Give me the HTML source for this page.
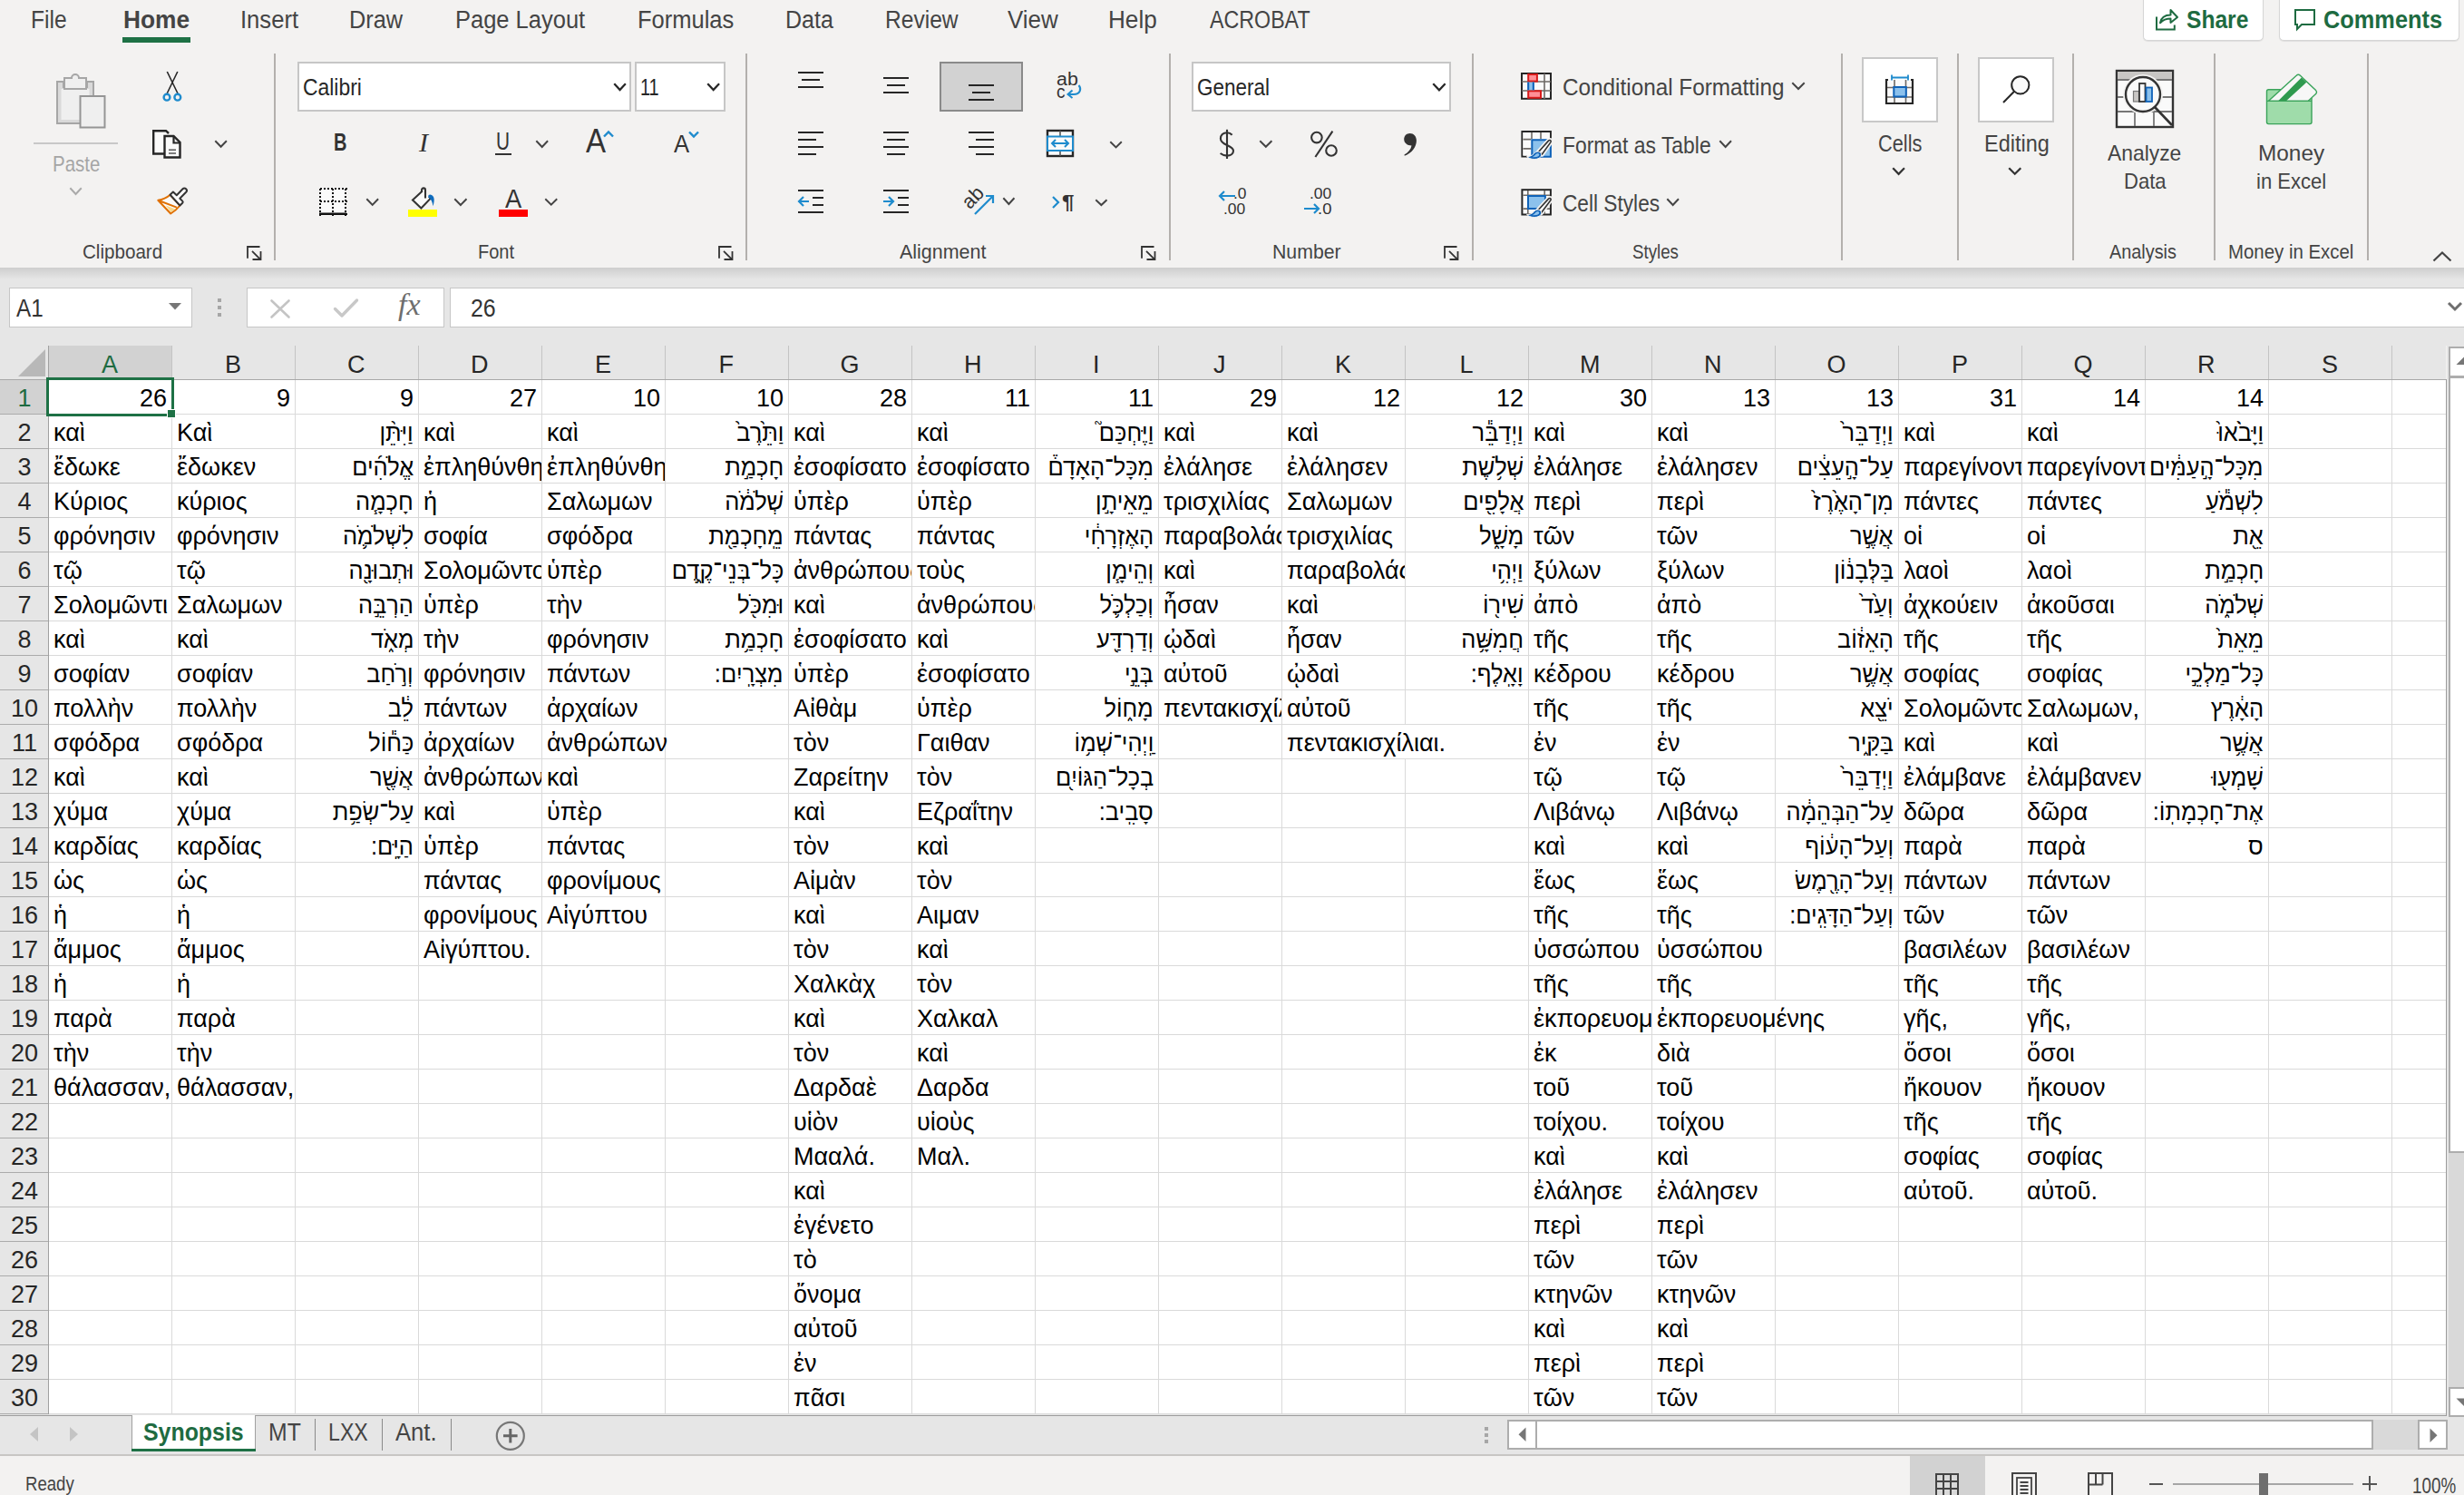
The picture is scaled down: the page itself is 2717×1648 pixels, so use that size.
<!DOCTYPE html>
<html><head><meta charset="utf-8"><title>Excel</title>
<style>
html,body{margin:0;padding:0;}
body{width:2717px;height:1648px;overflow:hidden;position:relative;background:#f3f2f1;font-family:"Liberation Sans",sans-serif;}
.t{position:absolute;white-space:nowrap;}
.r{position:absolute;}
.s{position:absolute;overflow:visible;}
.cell{position:absolute;overflow:hidden;white-space:nowrap;font-size:27px;line-height:38px;color:#000;}
</style></head><body>

<div class="t" style="left:33.80px;top:8.59px;font-size:27px;line-height:27px;color:#444444;transform:scaleX(0.9091);transform-origin:0 0;">File</div>
<div class="t" style="left:136.00px;top:8.59px;font-size:27px;line-height:27px;color:#444444;font-weight:bold;transform:scaleX(0.9733);transform-origin:0 0;">Home</div>
<div class="t" style="left:264.80px;top:8.59px;font-size:27px;line-height:27px;color:#444444;transform:scaleX(0.9485);transform-origin:0 0;">Insert</div>
<div class="t" style="left:384.60px;top:8.59px;font-size:27px;line-height:27px;color:#444444;transform:scaleX(0.9375);transform-origin:0 0;">Draw</div>
<div class="t" style="left:502.20px;top:8.59px;font-size:27px;line-height:27px;color:#444444;transform:scaleX(0.9441);transform-origin:0 0;">Page Layout</div>
<div class="t" style="left:703.00px;top:8.59px;font-size:27px;line-height:27px;color:#444444;transform:scaleX(0.9442);transform-origin:0 0;">Formulas</div>
<div class="t" style="left:865.70px;top:8.59px;font-size:27px;line-height:27px;color:#444444;transform:scaleX(0.9259);transform-origin:0 0;">Data</div>
<div class="t" style="left:976.00px;top:8.59px;font-size:27px;line-height:27px;color:#444444;transform:scaleX(0.9101);transform-origin:0 0;">Review</div>
<div class="t" style="left:1111.00px;top:8.59px;font-size:27px;line-height:27px;color:#444444;transform:scaleX(0.9610);transform-origin:0 0;">View</div>
<div class="t" style="left:1221.80px;top:8.59px;font-size:27px;line-height:27px;color:#444444;transform:scaleX(0.9679);transform-origin:0 0;">Help</div>
<div class="t" style="left:1334.00px;top:8.59px;font-size:27px;line-height:27px;color:#444444;transform:scaleX(0.8605);transform-origin:0 0;">ACROBAT</div>
<div class="r" style="left:135px;top:41px;width:75px;height:6px;background:#1e7145;"></div>
<div class="r" style="left:2363px;top:-6px;width:131px;height:49px;background:#fff;border:1px solid #d6d6d6;border-radius:5px;box-shadow:0 1px 1px rgba(0,0,0,0.08)"></div>
<div class="r" style="left:2513px;top:-6px;width:197px;height:49px;background:#fff;border:1px solid #d6d6d6;border-radius:5px;box-shadow:0 1px 1px rgba(0,0,0,0.08)"></div>
<svg class="s" style="left:2376px;top:8px;" width="28" height="28" viewBox="0 0 28 28"><path d="M2 10.4 V24.4 H21.8 V19.5" fill="none" stroke="#1e6b41" stroke-width="2"/><path d="M6 17.2 C7 11.5 11.5 8.5 17.5 8.5 V3 L25 11 L17.5 17 V12.5 C12 12.5 9 14 6 17.2 Z" fill="none" stroke="#1e6b41" stroke-width="2" stroke-linejoin="round"/></svg>
<div class="t" style="left:2410.70px;top:7.74px;font-size:28px;line-height:28px;color:#1e6b41;font-weight:bold;transform:scaleX(0.8782);transform-origin:0 0;">Share</div>
<svg class="s" style="left:2528px;top:8px;" width="28" height="28" viewBox="0 0 28 28"><path d="M3 3 H24 V19 H10 L5 24 V19 H3 Z" fill="none" stroke="#1e6b41" stroke-width="2" stroke-linejoin="miter"/></svg>
<div class="t" style="left:2561.80px;top:7.74px;font-size:28px;line-height:28px;color:#1e6b41;font-weight:bold;transform:scaleX(0.9055);transform-origin:0 0;">Comments</div>
<div class="r" style="left:302px;top:59px;width:2px;height:228px;background:#b3b0ad;"></div>
<div class="r" style="left:822px;top:59px;width:2px;height:228px;background:#b3b0ad;"></div>
<div class="r" style="left:1289px;top:59px;width:2px;height:228px;background:#b3b0ad;"></div>
<div class="r" style="left:1623px;top:59px;width:2px;height:228px;background:#b3b0ad;"></div>
<div class="r" style="left:2030px;top:59px;width:2px;height:228px;background:#b3b0ad;"></div>
<div class="r" style="left:2158px;top:59px;width:2px;height:228px;background:#b3b0ad;"></div>
<div class="r" style="left:2285px;top:59px;width:2px;height:228px;background:#b3b0ad;"></div>
<div class="r" style="left:2441px;top:59px;width:2px;height:228px;background:#b3b0ad;"></div>
<div class="r" style="left:2610px;top:59px;width:2px;height:228px;background:#b3b0ad;"></div>
<div class="t" style="left:90.60px;top:267.11px;font-size:22px;line-height:22px;color:#444444;transform:scaleX(0.9362);transform-origin:0 0;">Clipboard</div>
<div class="t" style="left:526.70px;top:267.11px;font-size:22px;line-height:22px;color:#444444;transform:scaleX(0.9091);transform-origin:0 0;">Font</div>
<div class="t" style="left:992.40px;top:267.11px;font-size:22px;line-height:22px;color:#444444;transform:scaleX(0.9755);transform-origin:0 0;">Alignment</div>
<div class="t" style="left:1402.60px;top:267.11px;font-size:22px;line-height:22px;color:#444444;transform:scaleX(0.9667);transform-origin:0 0;">Number</div>
<div class="t" style="left:1800.00px;top:267.11px;font-size:22px;line-height:22px;color:#444444;transform:scaleX(0.8500);transform-origin:0 0;">Styles</div>
<div class="t" style="left:2326.40px;top:267.11px;font-size:22px;line-height:22px;color:#444444;transform:scaleX(0.9024);transform-origin:0 0;">Analysis</div>
<div class="t" style="left:2457.20px;top:267.11px;font-size:22px;line-height:22px;color:#444444;transform:scaleX(0.9275);transform-origin:0 0;">Money in Excel</div>
<svg class="s" style="left:272.4px;top:271px;" width="17" height="17" viewBox="0 0 17 17"><path d="M1 13.8 V1 H14.5" fill="none" stroke="#333" stroke-width="1.8"/><path d="M6 5.8 L15 14.8 M6.5 15 H15.5 V6" fill="none" stroke="#333" stroke-width="1.8"/></svg>
<svg class="s" style="left:791.5px;top:271px;" width="17" height="17" viewBox="0 0 17 17"><path d="M1 13.8 V1 H14.5" fill="none" stroke="#333" stroke-width="1.8"/><path d="M6 5.8 L15 14.8 M6.5 15 H15.5 V6" fill="none" stroke="#333" stroke-width="1.8"/></svg>
<svg class="s" style="left:1258px;top:271px;" width="17" height="17" viewBox="0 0 17 17"><path d="M1 13.8 V1 H14.5" fill="none" stroke="#333" stroke-width="1.8"/><path d="M6 5.8 L15 14.8 M6.5 15 H15.5 V6" fill="none" stroke="#333" stroke-width="1.8"/></svg>
<svg class="s" style="left:1592px;top:271px;" width="17" height="17" viewBox="0 0 17 17"><path d="M1 13.8 V1 H14.5" fill="none" stroke="#333" stroke-width="1.8"/><path d="M6 5.8 L15 14.8 M6.5 15 H15.5 V6" fill="none" stroke="#333" stroke-width="1.8"/></svg>
<svg class="s" style="left:2681px;top:276px;" width="24" height="14" viewBox="0 0 24 14"><polyline points="2.5,11.5 12,2.5 21.5,11.5" fill="none" stroke="#444" stroke-width="2.2"/></svg>
<svg class="s" style="left:60px;top:79px;" width="60" height="64" viewBox="0 0 60 64"><path d="M3 11 H10 V17 H36 V11 H43 V57 H3 Z" fill="#d9d9d9" stroke="#a6a6a6" stroke-width="2"/><rect x="7.5" y="19" width="31" height="34" fill="#efefef"/><path d="M11 4 H19 A4 4 0 0 1 27 4 H35 V16 H11 Z" transform="translate(0,3)" fill="#efefef" stroke="#a6a6a6" stroke-width="2"/><rect x="28.5" y="27" width="27" height="34.5" fill="#efefef" stroke="#959595" stroke-width="2"/></svg>
<div class="r" style="left:37px;top:157px;width:93px;height:2px;background:#c8c8c8;"></div>
<div class="t" style="left:57.60px;top:168.62px;font-size:24px;line-height:24px;color:#a5a5a5;transform:scaleX(0.8525);transform-origin:0 0;">Paste</div>
<svg class="s" style="left:75.5px;top:206px;" width="15.099999999999994" height="11" viewBox="0 0 15.099999999999994 11"><polyline points="2,2 7.55,8.00 13.10,2" fill="none" stroke="#aaaaaa" stroke-width="2" stroke-linecap="square" stroke-linejoin="miter"/></svg>
<svg class="s" style="left:176px;top:76px;" width="28" height="38" viewBox="0 0 28 38"><path d="M8.3 3 L20 27 M19.8 3 L8.2 27" fill="none" stroke="#262626" stroke-width="1.6"/><circle cx="8" cy="31.2" r="3.4" fill="none" stroke="#1e8bcd" stroke-width="2.4"/><circle cx="19.8" cy="31.2" r="3.4" fill="none" stroke="#1e8bcd" stroke-width="2.4"/></svg>
<svg class="s" style="left:166px;top:141px;" width="38" height="36" viewBox="0 0 38 36"><path d="M15.5 28.5 H3.2 V3.2 H17 L20 6" fill="#fafafa" stroke="#262626" stroke-width="2.4"/><path d="M15.5 9 H25.5 L32.5 16 V32.5 H15.5 Z" fill="#fafafa" stroke="#262626" stroke-width="2.4"/><path d="M25.5 9 V16.5 H32.5" fill="none" stroke="#262626" stroke-width="2.2"/><path d="M20 24.3 H28 M20 28 H28" stroke="#555" stroke-width="1.6"/></svg>
<svg class="s" style="left:236.2px;top:154px;" width="15.200000000000017" height="10.800000000000011" viewBox="0 0 15.200000000000017 10.800000000000011"><polyline points="2,2 7.60,7.80 13.20,2" fill="none" stroke="#444" stroke-width="2" stroke-linecap="square" stroke-linejoin="miter"/></svg>
<svg class="s" style="left:172px;top:205px;" width="38" height="36" viewBox="0 0 38 36"><path d="M2.3 15.8 C8 15 12 13 15.6 9.8 L26.4 21.5 C23 26 19.5 28.5 16.2 30.5 Z" fill="#fafafa"/><path d="M10.8 21.5 L21.5 25.4 L16.5 29 Z" fill="#f9d98c"/><path d="M2.3 15.8 C8 15 12 13 15.6 9.8 L26.4 21.5 C23 26 19.5 28.5 16.2 30.5 Z M2.3 15.8 L22.8 23.6" fill="none" stroke="#e07000" stroke-width="2" stroke-linejoin="round"/><path d="M15.6 9.8 L18.9 6.5 L22.8 10.2 L29.5 3.3 A2.5 2.5 0 0 1 33.2 6.8 L26.3 13.7 L29.2 16.6 A1.6 1.6 0 0 1 29.2 18.8 L26.4 21.5 Z" fill="#fafafa" stroke="#333" stroke-width="2" stroke-linejoin="round"/></svg>
<div class="r" style="left:328px;top:67.6px;width:368px;height:55px;background:#fff;box-sizing:border-box;border:2px solid #c6c6c6;"></div>
<div class="r" style="left:699.5px;top:67.6px;width:100px;height:55px;background:#fff;box-sizing:border-box;border:2px solid #c6c6c6;"></div>
<div class="t" style="left:333.50px;top:83.88px;font-size:25px;line-height:25px;color:#262626;transform:scaleX(0.9155);transform-origin:0 0;">Calibri</div>
<svg class="s" style="left:676.4px;top:91.3px;" width="15.100000000000023" height="11.100000000000009" viewBox="0 0 15.100000000000023 11.100000000000009"><polyline points="2,2 7.55,8.10 13.10,2" fill="none" stroke="#262626" stroke-width="2.2" stroke-linecap="square" stroke-linejoin="miter"/></svg>
<div class="t" style="left:706.00px;top:83.58px;font-size:25px;line-height:25px;color:#262626;transform:scaleX(0.7962);transform-origin:0 0;">11</div>
<svg class="s" style="left:779.3px;top:91.3px;" width="15.300000000000068" height="11.100000000000009" viewBox="0 0 15.300000000000068 11.100000000000009"><polyline points="2,2 7.65,8.10 13.30,2" fill="none" stroke="#262626" stroke-width="2.2" stroke-linecap="square" stroke-linejoin="miter"/></svg>
<div class="t" style="left:367.50px;top:143.34px;font-size:28px;line-height:28px;color:#333;font-weight:bold;transform:scaleX(0.7150);transform-origin:0 0;">B</div>
<div class="t" style="left:462px;top:142px;font-family:'Liberation Serif';font-style:italic;font-size:30px;line-height:30px;color:#333">I</div>
<div class="t" style="left:547.00px;top:143.19px;font-size:27px;line-height:27px;color:#333;transform:scaleX(0.7700);transform-origin:0 0;">U</div>
<div class="r" style="left:546px;top:169px;width:18px;height:2px;background:#333;"></div>
<svg class="s" style="left:590.3px;top:154.2px;" width="15.400000000000091" height="11.0" viewBox="0 0 15.400000000000091 11.0"><polyline points="2,2 7.70,8.00 13.40,2" fill="none" stroke="#444" stroke-width="2" stroke-linecap="square" stroke-linejoin="miter"/></svg>
<div class="t" style="left:645.90px;top:138.48px;font-size:36px;line-height:36px;color:#333;transform:scaleX(0.9167);transform-origin:0 0;">A</div>
<svg class="s" style="left:664px;top:143px;" width="14" height="10" viewBox="0 0 14 10"><polyline points="2,7.5 7,2.5 12,7.5" fill="none" stroke="#1e8bcd" stroke-width="2.4"/></svg>
<div class="t" style="left:743.20px;top:145.24px;font-size:28px;line-height:28px;color:#333;transform:scaleX(0.9158);transform-origin:0 0;">A</div>
<svg class="s" style="left:758px;top:143px;" width="14" height="10" viewBox="0 0 14 10"><polyline points="2,2.5 7,7.5 12,2.5" fill="none" stroke="#1e8bcd" stroke-width="2.4"/></svg>
<svg class="s" style="left:352px;top:207px;" width="31" height="31" viewBox="0 0 31 31"><rect x="0" y="0" width="30" height="28" fill="#fafafa"/><g fill="#111"><rect x="1" y="0" width="2" height="2"/><rect x="1" y="28" width="2" height="2"/><rect x="0" y="1" width="2" height="2"/><rect x="28" y="1" width="2" height="2"/><rect x="14" y="1" width="2" height="2"/><rect x="1" y="14" width="2" height="2"/><rect x="5" y="0" width="2" height="2"/><rect x="5" y="28" width="2" height="2"/><rect x="0" y="5" width="2" height="2"/><rect x="28" y="5" width="2" height="2"/><rect x="14" y="5" width="2" height="2"/><rect x="5" y="14" width="2" height="2"/><rect x="9" y="0" width="2" height="2"/><rect x="9" y="28" width="2" height="2"/><rect x="0" y="9" width="2" height="2"/><rect x="28" y="9" width="2" height="2"/><rect x="14" y="9" width="2" height="2"/><rect x="9" y="14" width="2" height="2"/><rect x="13" y="0" width="2" height="2"/><rect x="13" y="28" width="2" height="2"/><rect x="0" y="13" width="2" height="2"/><rect x="28" y="13" width="2" height="2"/><rect x="14" y="13" width="2" height="2"/><rect x="13" y="14" width="2" height="2"/><rect x="17" y="0" width="2" height="2"/><rect x="17" y="28" width="2" height="2"/><rect x="0" y="17" width="2" height="2"/><rect x="28" y="17" width="2" height="2"/><rect x="14" y="17" width="2" height="2"/><rect x="17" y="14" width="2" height="2"/><rect x="21" y="0" width="2" height="2"/><rect x="21" y="28" width="2" height="2"/><rect x="0" y="21" width="2" height="2"/><rect x="28" y="21" width="2" height="2"/><rect x="14" y="21" width="2" height="2"/><rect x="21" y="14" width="2" height="2"/><rect x="25" y="0" width="2" height="2"/><rect x="25" y="28" width="2" height="2"/><rect x="0" y="25" width="2" height="2"/><rect x="28" y="25" width="2" height="2"/><rect x="14" y="25" width="2" height="2"/><rect x="25" y="14" width="2" height="2"/><rect x="29" y="0" width="2" height="2"/><rect x="29" y="28" width="2" height="2"/><rect x="0" y="29" width="2" height="2"/><rect x="28" y="29" width="2" height="2"/><rect x="14" y="29" width="2" height="2"/><rect x="29" y="14" width="2" height="2"/></g><rect x="0" y="27.5" width="30" height="2.5" fill="#111"/></svg>
<svg class="s" style="left:402.5px;top:218px;" width="15.399999999999977" height="10.900000000000006" viewBox="0 0 15.399999999999977 10.900000000000006"><polyline points="2,2 7.70,7.90 13.40,2" fill="none" stroke="#444" stroke-width="2" stroke-linecap="square" stroke-linejoin="miter"/></svg>
<svg class="s" style="left:448px;top:205px;" width="40" height="28" viewBox="0 0 40 28"><path d="M17 6.3 L7 15.5 L16.4 24.5 L26.8 13.6 L21 8 Z" fill="#fafafa"/><path d="M17 6.3 L7 15.5 L16.4 24.5 L26.8 13.6 L24.8 11.6" fill="none" stroke="#333" stroke-width="2.1" stroke-linejoin="miter"/><path d="M17 7 V4.4 A2 2 0 0 1 21 4.4 V13.5" fill="none" stroke="#333" stroke-width="2.1"/><path d="M24.4 10.2 C26 9 28.5 9.3 30.2 12.5 C31.2 15 30.6 19 29.4 22.2 C29 18 27.5 14.5 24.4 12.5 Z" fill="#0f6cbd"/></svg>
<div class="r" style="left:450px;top:231px;width:32px;height:8px;background:#ffff00;"></div>
<svg class="s" style="left:500px;top:218px;" width="15.799999999999955" height="11" viewBox="0 0 15.799999999999955 11"><polyline points="2,2 7.90,8.00 13.80,2" fill="none" stroke="#444" stroke-width="2" stroke-linecap="square" stroke-linejoin="miter"/></svg>
<div class="t" style="left:557.30px;top:203.65px;font-size:30px;line-height:30px;color:#333;transform:scaleX(0.9100);transform-origin:0 0;">A</div>
<div class="r" style="left:550px;top:231px;width:32px;height:8px;background:#ff0000;"></div>
<svg class="s" style="left:600.4px;top:218.4px;" width="15.5" height="10.599999999999994" viewBox="0 0 15.5 10.599999999999994"><polyline points="2,2 7.75,7.60 13.50,2" fill="none" stroke="#444" stroke-width="2" stroke-linecap="square" stroke-linejoin="miter"/></svg>
<div class="r" style="left:1036px;top:67.6px;width:92px;height:55px;background:#d2d2d2;box-sizing:border-box;border:2px solid #8a8a8a;"></div>
<div class="r" style="left:880px;top:79px;width:28px;height:2px;background:#262626;"></div>
<div class="r" style="left:884px;top:87px;width:20px;height:2px;background:#262626;"></div>
<div class="r" style="left:880px;top:95px;width:28px;height:2px;background:#262626;"></div>
<div class="r" style="left:974px;top:85px;width:28px;height:2px;background:#262626;"></div>
<div class="r" style="left:978px;top:93px;width:20px;height:2px;background:#262626;"></div>
<div class="r" style="left:974px;top:101px;width:28px;height:2px;background:#262626;"></div>
<div class="r" style="left:1068px;top:93px;width:28px;height:2px;background:#262626;"></div>
<div class="r" style="left:1072px;top:101px;width:20px;height:2px;background:#262626;"></div>
<div class="r" style="left:1068px;top:109px;width:28px;height:2px;background:#262626;"></div>
<div class="r" style="left:880px;top:145px;width:28px;height:2px;background:#262626;"></div>
<div class="r" style="left:880px;top:153px;width:20px;height:2px;background:#262626;"></div>
<div class="r" style="left:880px;top:161px;width:28px;height:2px;background:#262626;"></div>
<div class="r" style="left:880px;top:169px;width:20px;height:2px;background:#262626;"></div>
<div class="r" style="left:974px;top:145px;width:28px;height:2px;background:#262626;"></div>
<div class="r" style="left:978px;top:153px;width:20px;height:2px;background:#262626;"></div>
<div class="r" style="left:974px;top:161px;width:28px;height:2px;background:#262626;"></div>
<div class="r" style="left:978px;top:169px;width:20px;height:2px;background:#262626;"></div>
<div class="r" style="left:1068px;top:145px;width:28px;height:2px;background:#262626;"></div>
<div class="r" style="left:1076px;top:153px;width:20px;height:2px;background:#262626;"></div>
<div class="r" style="left:1068px;top:161px;width:28px;height:2px;background:#262626;"></div>
<div class="r" style="left:1076px;top:169px;width:20px;height:2px;background:#262626;"></div>
<div class="r" style="left:880px;top:209px;width:28px;height:2px;background:#262626;"></div>
<div class="r" style="left:896px;top:217px;width:12px;height:2px;background:#262626;"></div>
<div class="r" style="left:896px;top:225px;width:12px;height:2px;background:#262626;"></div>
<div class="r" style="left:880px;top:233px;width:28px;height:2px;background:#262626;"></div>
<div class="r" style="left:974px;top:209px;width:28px;height:2px;background:#262626;"></div>
<div class="r" style="left:990px;top:217px;width:12px;height:2px;background:#262626;"></div>
<div class="r" style="left:990px;top:225px;width:12px;height:2px;background:#262626;"></div>
<div class="r" style="left:974px;top:233px;width:28px;height:2px;background:#262626;"></div>
<svg class="s" style="left:878px;top:214px;" width="16" height="16" viewBox="0 0 16 16"><path d="M14 8 H3 M8 3 L3 8 L8 13" fill="none" stroke="#1e8bcd" stroke-width="2.2"/></svg>
<svg class="s" style="left:972px;top:214px;" width="16" height="16" viewBox="0 0 16 16"><path d="M2 8 H13 M8 3 L13 8 L8 13" fill="none" stroke="#1e8bcd" stroke-width="2.2"/></svg>
<div class="t" style="left:1164.80px;top:77.40px;font-size:20px;line-height:20px;color:#333;transform:scaleX(1.0682);transform-origin:0 0;">ab</div>
<div class="t" style="left:1164.80px;top:91.40px;font-size:20px;line-height:20px;color:#333;transform:scaleX(0.9500);transform-origin:0 0;">c</div>
<svg class="s" style="left:1174px;top:92px;" width="20" height="16" viewBox="0 0 20 16"><path d="M15.5 2 C19 6 17 12 10 12 H4 M8.5 7.5 L3.5 12 L8.5 16" fill="none" stroke="#1e8bcd" stroke-width="2"/></svg>
<svg class="s" style="left:1152px;top:141px;" width="34" height="34" viewBox="0 0 34 34"><rect x="3" y="3" width="28" height="28" fill="#fafafa" stroke="#262626" stroke-width="2.4"/><path d="M17 3 V9 M17 25 V31" stroke="#555" stroke-width="1.6"/><rect x="3" y="9.5" width="28" height="15.5" fill="#fafafa" stroke="#1e8bcd" stroke-width="2"/><path d="M8 17 H26 M12 13 L8 17 L12 21 M22 13 L26 17 L22 21" fill="none" stroke="#1e8bcd" stroke-width="2"/></svg>
<svg class="s" style="left:1222.5px;top:154.6px;" width="15.099999999999909" height="10.400000000000006" viewBox="0 0 15.099999999999909 10.400000000000006"><polyline points="2,2 7.55,7.40 13.10,2" fill="none" stroke="#444" stroke-width="2" stroke-linecap="square" stroke-linejoin="miter"/></svg>
<div class="t" style="left:1062px;top:204px;font-size:22px;line-height:22px;color:#333;transform:rotate(-45deg);transform-origin:15px 14px">ab</div>
<svg class="s" style="left:1072px;top:212px;" width="28" height="28" viewBox="0 0 28 28"><path d="M3 24 L23 4 M15 4 H23 V12" fill="none" stroke="#1e8bcd" stroke-width="2.2"/></svg>
<svg class="s" style="left:1104.6px;top:216.9px;" width="14.800000000000182" height="11.0" viewBox="0 0 14.800000000000182 11.0"><polyline points="2,2 7.40,8.00 12.80,2" fill="none" stroke="#444" stroke-width="2" stroke-linecap="square" stroke-linejoin="miter"/></svg>
<svg class="s" style="left:1158px;top:215px;" width="12" height="16" viewBox="0 0 12 16"><polyline points="3,2 9,8 3,14" fill="none" stroke="#1e8bcd" stroke-width="2.2"/></svg>
<div class="t" style="left:1170.50px;top:212.41px;font-size:22px;line-height:22px;color:#333;font-weight:bold;transform:scaleX(1.1083);transform-origin:0 0;">¶</div>
<svg class="s" style="left:1206.6px;top:218.8px;" width="14.800000000000182" height="10.099999999999994" viewBox="0 0 14.800000000000182 10.099999999999994"><polyline points="2,2 7.40,7.10 12.80,2" fill="none" stroke="#444" stroke-width="2" stroke-linecap="square" stroke-linejoin="miter"/></svg>
<div class="r" style="left:1314.3px;top:67.6px;width:286px;height:55px;background:#fff;box-sizing:border-box;border:2px solid #c6c6c6;"></div>
<div class="t" style="left:1319.50px;top:83.88px;font-size:25px;line-height:25px;color:#262626;transform:scaleX(0.8989);transform-origin:0 0;">General</div>
<svg class="s" style="left:1579px;top:91px;" width="15.900000000000091" height="11.299999999999997" viewBox="0 0 15.900000000000091 11.299999999999997"><polyline points="2,2 7.95,8.30 13.90,2" fill="none" stroke="#262626" stroke-width="2.2" stroke-linecap="square" stroke-linejoin="miter"/></svg>
<svg class="s" style="left:1344px;top:141px;" width="20" height="36" viewBox="0 0 20 36"><path d="M14.6 7.8 C13 5.9 11 5.2 9 5.2 C4.6 5.2 1.9 7.9 1.9 11.8 C1.9 15.8 5.3 17.4 9 19 C12.9 20.7 16 22.2 16 25.3 C16 28.6 13 30.6 9 30.6 C6 30.6 3.6 29.6 1.6 28" fill="none" stroke="#333" stroke-width="2.1"/><path d="M9 1.8 V34" stroke="#333" stroke-width="2.1"/></svg>
<svg class="s" style="left:1388.3px;top:154.4px;" width="15.700000000000045" height="10.799999999999983" viewBox="0 0 15.700000000000045 10.799999999999983"><polyline points="2,2 7.85,7.80 13.70,2" fill="none" stroke="#444" stroke-width="2" stroke-linecap="square" stroke-linejoin="miter"/></svg>
<svg class="s" style="left:1443px;top:143px;" width="34" height="32" viewBox="0 0 34 32"><circle cx="8.9" cy="8.6" r="5.8" fill="none" stroke="#333" stroke-width="2.1"/><circle cx="25" cy="23" r="5.8" fill="none" stroke="#333" stroke-width="2.1"/><path d="M26.4 1.7 L7.4 30" stroke="#333" stroke-width="2.1"/></svg>
<svg class="s" style="left:1545px;top:145px;" width="20" height="30" viewBox="0 0 20 30"><path d="M9.6 2 C13.8 2 16.9 5 16.9 10 C16.9 17 12 23.5 3.8 26.8 L3.5 25.5 C8 23 10.8 19.5 11.5 15.5 C7 15.5 3.2 13 3.2 8.6 C3.2 4.8 6 2 9.6 2 Z" fill="#333"/></svg>
<div class="t" style="left:1359.70px;top:205.33px;font-size:17px;line-height:17px;color:#333;transform:scaleX(1.0214);transform-origin:0 0;">.0</div>
<div class="t" style="left:1349.40px;top:222.23px;font-size:17px;line-height:17px;color:#333;transform:scaleX(1.0250);transform-origin:0 0;">.00</div>
<svg class="s" style="left:1342px;top:208px;" width="22" height="16" viewBox="0 0 22 16"><path d="M20 8 H3 M8 3 L3 8 L8 13" fill="none" stroke="#1e8bcd" stroke-width="2.2"/></svg>
<div class="t" style="left:1443.50px;top:205.33px;font-size:17px;line-height:17px;color:#333;transform:scaleX(1.0292);transform-origin:0 0;">.00</div>
<div class="t" style="left:1453.00px;top:222.23px;font-size:17px;line-height:17px;color:#333;transform:scaleX(1.0857);transform-origin:0 0;">.0</div>
<svg class="s" style="left:1436px;top:221.5px;" width="22" height="16" viewBox="0 0 22 16"><path d="M2 8 H18 M13 3 L18 8 L13 13" fill="none" stroke="#1e8bcd" stroke-width="2.2"/></svg>
<svg class="s" style="left:1677px;top:80px;" width="34" height="30" viewBox="0 0 34 30"><rect x="1" y="1" width="32" height="27.8" fill="#fafafa" stroke="#262626" stroke-width="2"/><path d="M1 10 H33 M1 20 H33 M26 1 V29" stroke="#6e6a66" stroke-width="1.6"/><rect x="8.2" y="2" width="9.7" height="7.6" fill="#ff8f96" stroke="#d81b1b" stroke-width="2"/><rect x="8.2" y="20.3" width="13.8" height="7.5" fill="#ff8f96" stroke="#d81b1b" stroke-width="2"/><rect x="7.2" y="10.6" width="7.6" height="8.7" fill="#8cc1ec"/><path d="M8.2 10.6 V19.3 M13.8 10.6 V19.3" stroke="#0f62b8" stroke-width="2"/></svg>
<div class="t" style="left:1722.80px;top:83.67px;font-size:25px;line-height:25px;color:#444444;transform:scaleX(0.9722);transform-origin:0 0;">Conditional Formatting</div>
<svg class="s" style="left:1974.9px;top:90.3px;" width="16.0" height="11.0" viewBox="0 0 16.0 11.0"><polyline points="2,2 8.00,8.00 14.00,2" fill="none" stroke="#444" stroke-width="2" stroke-linecap="square" stroke-linejoin="miter"/></svg>
<svg class="s" style="left:1677px;top:144px;" width="36" height="34" viewBox="0 0 36 34"><path d="M7 28.6 H1.4 V1.1 H32.9 V9" fill="#fafafa" stroke="#262626" stroke-width="2"/><rect x="2.4" y="2.1" width="29.5" height="25.5" fill="#fafafa"/><path d="M12 2 V9 M22 2 V9 M2.4 9.6 H11.3 M2.4 19.9 H11.3" stroke="#6e6a66" stroke-width="1.6"/><path d="M12.3 28.7 V10.2 H32.9 V28.7 Z" fill="#8cc1ec" stroke="#0f62b8" stroke-width="2"/><path d="M19.5 23.5 L30.3 11.4 C31.8 9.9 33.8 10.6 33 12.6 L23.2 26.2 Z" fill="#fafafa" stroke="#f3f2f1" stroke-width="5" stroke-linejoin="round"/><path d="M19.5 23.5 L30.3 11.4 C31.8 9.9 33.8 10.6 33 12.6 L23.2 26.2 Z" fill="#fafafa" stroke="#333" stroke-width="1.6" stroke-linejoin="round"/><path d="M6.5 28.6 C10 28.6 12.5 27.6 14.5 25.2 C16.5 22.8 19.5 22.3 21.8 24.3 C23.6 26.2 22.6 29.5 19 30.8 C15 32.2 10 31.5 6.5 28.6 Z" fill="#0f62b8" stroke="#f3f2f1" stroke-width="1"/><path d="M12.5 29.2 C14.5 28.6 15.8 26.8 17 25.6 C18.5 24.3 20.5 25 20.3 26.8 C20 28.6 17.5 29.8 12.5 29.2 Z" fill="#8cc1ec"/></svg>
<div class="t" style="left:1723.00px;top:147.78px;font-size:25px;line-height:25px;color:#444444;transform:scaleX(0.9151);transform-origin:0 0;">Format as Table</div>
<svg class="s" style="left:1894.5px;top:154px;" width="15.299999999999955" height="11" viewBox="0 0 15.299999999999955 11"><polyline points="2,2 7.65,8.00 13.30,2" fill="none" stroke="#444" stroke-width="2" stroke-linecap="square" stroke-linejoin="miter"/></svg>
<svg class="s" style="left:1677px;top:208px;" width="36" height="34" viewBox="0 0 36 34"><rect x="1.4" y="1.2" width="31.5" height="27.3" fill="#fafafa" stroke="#262626" stroke-width="2"/><path d="M7.8 2 V28 M26.2 2 V28 M2.4 7.2 H32 M2.4 22.1 H32" stroke="#6e6a66" stroke-width="1.6"/><path d="M8 22.1 V7.9 H26.9 V22.1 Z" fill="#8cc1ec" stroke="#0f62b8" stroke-width="2"/><path d="M18.5 24.3 L30.3 11.4 C31.8 9.9 33.8 10.6 33 12.6 L22.2 27 Z" fill="#fafafa" stroke="#f3f2f1" stroke-width="5" stroke-linejoin="round"/><path d="M18.5 24.3 L30.3 11.4 C31.8 9.9 33.8 10.6 33 12.6 L22.2 27 Z" fill="#fafafa" stroke="#333" stroke-width="1.6" stroke-linejoin="round"/><path d="M6.5 28.6 C10 28.6 12.5 27.6 14.5 25.2 C16.5 22.8 19.5 22.3 21.8 24.3 C23.6 26.2 22.6 29.5 19 30.8 C15 32.2 10 31.5 6.5 28.6 Z" fill="#0f62b8" stroke="#f3f2f1" stroke-width="1"/><path d="M12.5 29.2 C14.5 28.6 15.8 26.8 17 25.6 C18.5 24.3 20.5 25 20.3 26.8 C20 28.6 17.5 29.8 12.5 29.2 Z" fill="#8cc1ec"/></svg>
<div class="t" style="left:1722.80px;top:211.57px;font-size:25px;line-height:25px;color:#444444;transform:scaleX(0.9068);transform-origin:0 0;">Cell Styles</div>
<svg class="s" style="left:1836.7px;top:218.4px;" width="15.299999999999955" height="11.0" viewBox="0 0 15.299999999999955 11.0"><polyline points="2,2 7.65,8.00 13.30,2" fill="none" stroke="#444" stroke-width="2" stroke-linecap="square" stroke-linejoin="miter"/></svg>
<div class="r" style="left:2053px;top:63px;width:84px;height:72px;background:#fff;box-sizing:border-box;border:2px solid #c8c8c8;"></div>
<svg class="s" style="left:2077px;top:81px;" width="36" height="36" viewBox="0 0 36 36"><rect x="3" y="7" width="29" height="26" fill="#fafafa"/><path d="M3 15.5 H32 M3 26 H32 M12 7 V33 M24.5 7 V33" stroke="#6e6a66" stroke-width="1.6"/><path d="M5 7 H3 V33 H32 V7 H30" fill="none" stroke="#262626" stroke-width="2.2"/><rect x="11.3" y="15" width="13.5" height="10.5" fill="#8cc1ec" stroke="#0f62b8" stroke-width="2"/><path d="M9 4.5 H27 M9 1.5 V7.5 M27 1.5 V7.5" fill="none" stroke="#1e8bcd" stroke-width="1.8"/></svg>
<div class="t" style="left:2070.80px;top:145.88px;font-size:25px;line-height:25px;color:#444444;transform:scaleX(0.8714);transform-origin:0 0;">Cells</div>
<svg class="s" style="left:2086.4px;top:184.2px;" width="15.199999999999818" height="10.800000000000011" viewBox="0 0 15.199999999999818 10.800000000000011"><polyline points="2,2 7.60,7.80 13.20,2" fill="none" stroke="#333" stroke-width="2.2" stroke-linecap="square" stroke-linejoin="miter"/></svg>
<div class="r" style="left:2181px;top:63px;width:84px;height:72px;background:#fff;box-sizing:border-box;border:2px solid #c8c8c8;"></div>
<svg class="s" style="left:2204px;top:79px;" width="40" height="40" viewBox="0 0 40 40"><circle cx="23.8" cy="14.8" r="9.6" fill="#fafafa" stroke="#262626" stroke-width="2"/><path d="M16.8 22 L5 34" stroke="#262626" stroke-width="2"/></svg>
<div class="t" style="left:2187.50px;top:145.88px;font-size:25px;line-height:25px;color:#444444;transform:scaleX(0.9382);transform-origin:0 0;">Editing</div>
<svg class="s" style="left:2214.3px;top:184.2px;" width="15.5" height="10.800000000000011" viewBox="0 0 15.5 10.800000000000011"><polyline points="2,2 7.75,7.80 13.50,2" fill="none" stroke="#333" stroke-width="2.2" stroke-linecap="square" stroke-linejoin="miter"/></svg>
<svg class="s" style="left:2331px;top:75px;" width="68" height="68" viewBox="0 0 68 68"><rect x="3" y="3" width="62" height="62" fill="#fafafa" stroke="#333" stroke-width="2.4"/><rect x="4" y="4" width="60" height="9" fill="#c8c6c4"/><path d="M4 13 H64 M4 32 H64 M4 48 H64 M23 13 V64 M44 13 V64" stroke="#777" stroke-width="1.8"/><circle cx="32" cy="29" r="20.5" fill="#f3f2f1" stroke="#f3f2f1" stroke-width="3"/><circle cx="32" cy="29" r="19" fill="#fafafa" stroke="#333" stroke-width="2.4"/><path d="M45 43 L64 63" stroke="#333" stroke-width="2.6"/><rect x="21.5" y="25.5" width="6" height="11.5" fill="#c8c6c4" stroke="#777" stroke-width="1.2"/><rect x="28" y="17" width="6.5" height="20" fill="#fafafa" stroke="#333" stroke-width="1.8"/><rect x="35.5" y="21.5" width="6.5" height="15.5" fill="#8cc1ec" stroke="#0f62b8" stroke-width="1.8"/></svg>
<div class="t" style="left:2323.80px;top:156.72px;font-size:24px;line-height:24px;color:#444444;transform:scaleX(0.9518);transform-origin:0 0;">Analyze</div>
<div class="t" style="left:2341.50px;top:187.92px;font-size:24px;line-height:24px;color:#444444;transform:scaleX(0.9176);transform-origin:0 0;">Data</div>
<svg class="s" style="left:2496px;top:78px;" width="64" height="62" viewBox="0 0 64 62"><rect x="3.5" y="20.8" width="49.5" height="37.8" rx="2" fill="#9fdcaa" stroke="#3aa35a" stroke-width="1.4"/><path d="M5.2 33.4 L36.2 5.3 A3 3 0 0 1 40.4 5.3 L57.6 21.6 A3 3 0 0 1 57.6 25.6 L49 33.4 Z" fill="#f7f7f7" stroke="#3aa35a" stroke-width="1.4"/><path d="M15.9 33.4 L41.8 7.6 L47.3 12.8 L24.7 33.4 Z" fill="#2f9a4f"/><path d="M3.5 33.4 H53" stroke="#3aa35a" stroke-width="1.2"/></svg>
<div class="t" style="left:2490.20px;top:156.72px;font-size:24px;line-height:24px;color:#444444;transform:scaleX(1.0153);transform-origin:0 0;">Money</div>
<div class="t" style="left:2488.40px;top:187.92px;font-size:24px;line-height:24px;color:#444444;transform:scaleX(0.9190);transform-origin:0 0;">in Excel</div>
<div class="r" style="left:0px;top:295px;width:2717px;height:86px;background:#e6e6e6;"></div>
<div class="r" style="left:0px;top:295px;width:2717px;height:13px;background:linear-gradient(#cecece,#e6e6e6);"></div>
<div class="r" style="left:53px;top:418px;width:2644px;height:1142px;background:#fff;"></div>
<div class="r" style="left:0px;top:381px;width:2697px;height:37px;background:#e6e6e6;"></div>
<div class="r" style="left:54px;top:381px;width:135px;height:37px;background:#d2d2d2;"></div>
<div class="r" style="left:0px;top:418px;width:53px;height:1140px;background:#e6e6e6;"></div>
<div class="r" style="left:0px;top:419px;width:53px;height:37px;background:#d2d2d2;"></div>
<div class="r" style="left:53px;top:456px;width:2644px;height:1px;background:#dadada;"></div>
<div class="r" style="left:53px;top:494px;width:2644px;height:1px;background:#dadada;"></div>
<div class="r" style="left:53px;top:532px;width:2644px;height:1px;background:#dadada;"></div>
<div class="r" style="left:53px;top:570px;width:2644px;height:1px;background:#dadada;"></div>
<div class="r" style="left:53px;top:608px;width:2644px;height:1px;background:#dadada;"></div>
<div class="r" style="left:53px;top:646px;width:2644px;height:1px;background:#dadada;"></div>
<div class="r" style="left:53px;top:684px;width:2644px;height:1px;background:#dadada;"></div>
<div class="r" style="left:53px;top:722px;width:2644px;height:1px;background:#dadada;"></div>
<div class="r" style="left:53px;top:760px;width:2644px;height:1px;background:#dadada;"></div>
<div class="r" style="left:53px;top:798px;width:2644px;height:1px;background:#dadada;"></div>
<div class="r" style="left:53px;top:836px;width:2644px;height:1px;background:#dadada;"></div>
<div class="r" style="left:53px;top:874px;width:2644px;height:1px;background:#dadada;"></div>
<div class="r" style="left:53px;top:912px;width:2644px;height:1px;background:#dadada;"></div>
<div class="r" style="left:53px;top:950px;width:2644px;height:1px;background:#dadada;"></div>
<div class="r" style="left:53px;top:988px;width:2644px;height:1px;background:#dadada;"></div>
<div class="r" style="left:53px;top:1026px;width:2644px;height:1px;background:#dadada;"></div>
<div class="r" style="left:53px;top:1064px;width:2644px;height:1px;background:#dadada;"></div>
<div class="r" style="left:53px;top:1102px;width:2644px;height:1px;background:#dadada;"></div>
<div class="r" style="left:53px;top:1140px;width:2644px;height:1px;background:#dadada;"></div>
<div class="r" style="left:53px;top:1178px;width:2644px;height:1px;background:#dadada;"></div>
<div class="r" style="left:53px;top:1216px;width:2644px;height:1px;background:#dadada;"></div>
<div class="r" style="left:53px;top:1254px;width:2644px;height:1px;background:#dadada;"></div>
<div class="r" style="left:53px;top:1292px;width:2644px;height:1px;background:#dadada;"></div>
<div class="r" style="left:53px;top:1330px;width:2644px;height:1px;background:#dadada;"></div>
<div class="r" style="left:53px;top:1368px;width:2644px;height:1px;background:#dadada;"></div>
<div class="r" style="left:53px;top:1406px;width:2644px;height:1px;background:#dadada;"></div>
<div class="r" style="left:53px;top:1444px;width:2644px;height:1px;background:#dadada;"></div>
<div class="r" style="left:53px;top:1482px;width:2644px;height:1px;background:#dadada;"></div>
<div class="r" style="left:53px;top:1520px;width:2644px;height:1px;background:#dadada;"></div>
<div class="r" style="left:53px;top:1558px;width:2644px;height:1px;background:#dadada;"></div>
<div class="r" style="left:189px;top:418px;width:1px;height:1142px;background:#dadada;"></div>
<div class="r" style="left:325px;top:418px;width:1px;height:1142px;background:#dadada;"></div>
<div class="r" style="left:461px;top:418px;width:1px;height:1142px;background:#dadada;"></div>
<div class="r" style="left:597px;top:418px;width:1px;height:1142px;background:#dadada;"></div>
<div class="r" style="left:733px;top:418px;width:1px;height:1142px;background:#dadada;"></div>
<div class="r" style="left:869px;top:418px;width:1px;height:1142px;background:#dadada;"></div>
<div class="r" style="left:1005px;top:418px;width:1px;height:1142px;background:#dadada;"></div>
<div class="r" style="left:1141px;top:418px;width:1px;height:1142px;background:#dadada;"></div>
<div class="r" style="left:1277px;top:418px;width:1px;height:1142px;background:#dadada;"></div>
<div class="r" style="left:1413px;top:418px;width:1px;height:1142px;background:#dadada;"></div>
<div class="r" style="left:1549px;top:418px;width:1px;height:1142px;background:#dadada;"></div>
<div class="r" style="left:1685px;top:418px;width:1px;height:1142px;background:#dadada;"></div>
<div class="r" style="left:1821px;top:418px;width:1px;height:1142px;background:#dadada;"></div>
<div class="r" style="left:1957px;top:418px;width:1px;height:1142px;background:#dadada;"></div>
<div class="r" style="left:2093px;top:418px;width:1px;height:1142px;background:#dadada;"></div>
<div class="r" style="left:2229px;top:418px;width:1px;height:1142px;background:#dadada;"></div>
<div class="r" style="left:2365px;top:418px;width:1px;height:1142px;background:#dadada;"></div>
<div class="r" style="left:2501px;top:418px;width:1px;height:1142px;background:#dadada;"></div>
<div class="r" style="left:2637px;top:418px;width:1px;height:1142px;background:#dadada;"></div>
<div class="r" style="left:189px;top:381px;width:1px;height:37px;background:#c4c4c4;"></div>
<div class="r" style="left:325px;top:381px;width:1px;height:37px;background:#c4c4c4;"></div>
<div class="r" style="left:461px;top:381px;width:1px;height:37px;background:#c4c4c4;"></div>
<div class="r" style="left:597px;top:381px;width:1px;height:37px;background:#c4c4c4;"></div>
<div class="r" style="left:733px;top:381px;width:1px;height:37px;background:#c4c4c4;"></div>
<div class="r" style="left:869px;top:381px;width:1px;height:37px;background:#c4c4c4;"></div>
<div class="r" style="left:1005px;top:381px;width:1px;height:37px;background:#c4c4c4;"></div>
<div class="r" style="left:1141px;top:381px;width:1px;height:37px;background:#c4c4c4;"></div>
<div class="r" style="left:1277px;top:381px;width:1px;height:37px;background:#c4c4c4;"></div>
<div class="r" style="left:1413px;top:381px;width:1px;height:37px;background:#c4c4c4;"></div>
<div class="r" style="left:1549px;top:381px;width:1px;height:37px;background:#c4c4c4;"></div>
<div class="r" style="left:1685px;top:381px;width:1px;height:37px;background:#c4c4c4;"></div>
<div class="r" style="left:1821px;top:381px;width:1px;height:37px;background:#c4c4c4;"></div>
<div class="r" style="left:1957px;top:381px;width:1px;height:37px;background:#c4c4c4;"></div>
<div class="r" style="left:2093px;top:381px;width:1px;height:37px;background:#c4c4c4;"></div>
<div class="r" style="left:2229px;top:381px;width:1px;height:37px;background:#c4c4c4;"></div>
<div class="r" style="left:2365px;top:381px;width:1px;height:37px;background:#c4c4c4;"></div>
<div class="r" style="left:2501px;top:381px;width:1px;height:37px;background:#c4c4c4;"></div>
<div class="r" style="left:2637px;top:381px;width:1px;height:37px;background:#c4c4c4;"></div>
<div class="r" style="left:53px;top:381px;width:1px;height:1179px;background:#a0a0a0;"></div>
<div class="r" style="left:0px;top:456px;width:53px;height:1px;background:#ababab;"></div>
<div class="r" style="left:0px;top:494px;width:53px;height:1px;background:#ababab;"></div>
<div class="r" style="left:0px;top:532px;width:53px;height:1px;background:#ababab;"></div>
<div class="r" style="left:0px;top:570px;width:53px;height:1px;background:#ababab;"></div>
<div class="r" style="left:0px;top:608px;width:53px;height:1px;background:#ababab;"></div>
<div class="r" style="left:0px;top:646px;width:53px;height:1px;background:#ababab;"></div>
<div class="r" style="left:0px;top:684px;width:53px;height:1px;background:#ababab;"></div>
<div class="r" style="left:0px;top:722px;width:53px;height:1px;background:#ababab;"></div>
<div class="r" style="left:0px;top:760px;width:53px;height:1px;background:#ababab;"></div>
<div class="r" style="left:0px;top:798px;width:53px;height:1px;background:#ababab;"></div>
<div class="r" style="left:0px;top:836px;width:53px;height:1px;background:#ababab;"></div>
<div class="r" style="left:0px;top:874px;width:53px;height:1px;background:#ababab;"></div>
<div class="r" style="left:0px;top:912px;width:53px;height:1px;background:#ababab;"></div>
<div class="r" style="left:0px;top:950px;width:53px;height:1px;background:#ababab;"></div>
<div class="r" style="left:0px;top:988px;width:53px;height:1px;background:#ababab;"></div>
<div class="r" style="left:0px;top:1026px;width:53px;height:1px;background:#ababab;"></div>
<div class="r" style="left:0px;top:1064px;width:53px;height:1px;background:#ababab;"></div>
<div class="r" style="left:0px;top:1102px;width:53px;height:1px;background:#ababab;"></div>
<div class="r" style="left:0px;top:1140px;width:53px;height:1px;background:#ababab;"></div>
<div class="r" style="left:0px;top:1178px;width:53px;height:1px;background:#ababab;"></div>
<div class="r" style="left:0px;top:1216px;width:53px;height:1px;background:#ababab;"></div>
<div class="r" style="left:0px;top:1254px;width:53px;height:1px;background:#ababab;"></div>
<div class="r" style="left:0px;top:1292px;width:53px;height:1px;background:#ababab;"></div>
<div class="r" style="left:0px;top:1330px;width:53px;height:1px;background:#ababab;"></div>
<div class="r" style="left:0px;top:1368px;width:53px;height:1px;background:#ababab;"></div>
<div class="r" style="left:0px;top:1406px;width:53px;height:1px;background:#ababab;"></div>
<div class="r" style="left:0px;top:1444px;width:53px;height:1px;background:#ababab;"></div>
<div class="r" style="left:0px;top:1482px;width:53px;height:1px;background:#ababab;"></div>
<div class="r" style="left:0px;top:1520px;width:53px;height:1px;background:#ababab;"></div>
<div class="r" style="left:0px;top:1558px;width:53px;height:1px;background:#ababab;"></div>
<div class="r" style="left:0px;top:418px;width:2697px;height:1px;background:#a8a8a8;"></div>
<svg class="s" style="left:20px;top:385px;" width="31" height="30" viewBox="0 0 31 30"><path d="M30 0 L30 30 L0 30 Z" fill="#b8b8b8"/></svg>
<div class="t" style="left:112.00px;top:388.69px;font-size:27px;line-height:27px;color:#1e6b41;">A</div>
<div class="t" style="left:248.00px;top:388.69px;font-size:27px;line-height:27px;color:#262626;">B</div>
<div class="t" style="left:383.00px;top:388.69px;font-size:27px;line-height:27px;color:#262626;">C</div>
<div class="t" style="left:519.00px;top:388.69px;font-size:27px;line-height:27px;color:#262626;">D</div>
<div class="t" style="left:656.00px;top:388.69px;font-size:27px;line-height:27px;color:#262626;">E</div>
<div class="t" style="left:792.50px;top:388.69px;font-size:27px;line-height:27px;color:#262626;">F</div>
<div class="t" style="left:926.50px;top:388.69px;font-size:27px;line-height:27px;color:#262626;">G</div>
<div class="t" style="left:1063.00px;top:388.69px;font-size:27px;line-height:27px;color:#262626;">H</div>
<div class="t" style="left:1205.00px;top:388.69px;font-size:27px;line-height:27px;color:#262626;">I</div>
<div class="t" style="left:1338.00px;top:388.69px;font-size:27px;line-height:27px;color:#262626;">J</div>
<div class="t" style="left:1472.00px;top:388.69px;font-size:27px;line-height:27px;color:#262626;">K</div>
<div class="t" style="left:1609.50px;top:388.69px;font-size:27px;line-height:27px;color:#262626;">L</div>
<div class="t" style="left:1742.00px;top:388.69px;font-size:27px;line-height:27px;color:#262626;">M</div>
<div class="t" style="left:1879.00px;top:388.69px;font-size:27px;line-height:27px;color:#262626;">N</div>
<div class="t" style="left:2014.50px;top:388.69px;font-size:27px;line-height:27px;color:#262626;">O</div>
<div class="t" style="left:2152.00px;top:388.69px;font-size:27px;line-height:27px;color:#262626;">P</div>
<div class="t" style="left:2286.50px;top:388.69px;font-size:27px;line-height:27px;color:#262626;">Q</div>
<div class="t" style="left:2423.00px;top:388.69px;font-size:27px;line-height:27px;color:#262626;">R</div>
<div class="t" style="left:2560.00px;top:388.69px;font-size:27px;line-height:27px;color:#262626;">S</div>
<div class="t" style="left:19.50px;top:426.19px;font-size:27px;line-height:27px;color:#1e6b41;">1</div>
<div class="t" style="left:19.50px;top:464.19px;font-size:27px;line-height:27px;color:#262626;">2</div>
<div class="t" style="left:19.50px;top:502.19px;font-size:27px;line-height:27px;color:#262626;">3</div>
<div class="t" style="left:19.50px;top:540.18px;font-size:27px;line-height:27px;color:#262626;">4</div>
<div class="t" style="left:19.50px;top:578.18px;font-size:27px;line-height:27px;color:#262626;">5</div>
<div class="t" style="left:19.50px;top:616.18px;font-size:27px;line-height:27px;color:#262626;">6</div>
<div class="t" style="left:19.50px;top:654.18px;font-size:27px;line-height:27px;color:#262626;">7</div>
<div class="t" style="left:19.50px;top:692.18px;font-size:27px;line-height:27px;color:#262626;">8</div>
<div class="t" style="left:19.50px;top:730.18px;font-size:27px;line-height:27px;color:#262626;">9</div>
<div class="t" style="left:12.00px;top:768.18px;font-size:27px;line-height:27px;color:#262626;">10</div>
<div class="t" style="left:13.00px;top:806.18px;font-size:27px;line-height:27px;color:#262626;">11</div>
<div class="t" style="left:12.00px;top:844.18px;font-size:27px;line-height:27px;color:#262626;">12</div>
<div class="t" style="left:12.00px;top:882.18px;font-size:27px;line-height:27px;color:#262626;">13</div>
<div class="t" style="left:12.00px;top:920.18px;font-size:27px;line-height:27px;color:#262626;">14</div>
<div class="t" style="left:12.00px;top:958.18px;font-size:27px;line-height:27px;color:#262626;">15</div>
<div class="t" style="left:12.00px;top:996.18px;font-size:27px;line-height:27px;color:#262626;">16</div>
<div class="t" style="left:12.00px;top:1034.18px;font-size:27px;line-height:27px;color:#262626;">17</div>
<div class="t" style="left:12.00px;top:1072.18px;font-size:27px;line-height:27px;color:#262626;">18</div>
<div class="t" style="left:12.00px;top:1110.18px;font-size:27px;line-height:27px;color:#262626;">19</div>
<div class="t" style="left:12.00px;top:1148.18px;font-size:27px;line-height:27px;color:#262626;">20</div>
<div class="t" style="left:12.00px;top:1186.18px;font-size:27px;line-height:27px;color:#262626;">21</div>
<div class="t" style="left:12.00px;top:1224.18px;font-size:27px;line-height:27px;color:#262626;">22</div>
<div class="t" style="left:12.00px;top:1262.18px;font-size:27px;line-height:27px;color:#262626;">23</div>
<div class="t" style="left:12.00px;top:1300.18px;font-size:27px;line-height:27px;color:#262626;">24</div>
<div class="t" style="left:12.00px;top:1338.18px;font-size:27px;line-height:27px;color:#262626;">25</div>
<div class="t" style="left:12.00px;top:1376.18px;font-size:27px;line-height:27px;color:#262626;">26</div>
<div class="t" style="left:12.00px;top:1414.18px;font-size:27px;line-height:27px;color:#262626;">27</div>
<div class="t" style="left:12.00px;top:1452.18px;font-size:27px;line-height:27px;color:#262626;">28</div>
<div class="t" style="left:12.00px;top:1490.18px;font-size:27px;line-height:27px;color:#262626;">29</div>
<div class="t" style="left:12.00px;top:1528.18px;font-size:27px;line-height:27px;color:#262626;">30</div>
<div class="r" style="left:1549px;top:799px;width:1px;height:37px;background:#fff;"></div>
<div class="r" style="left:1957px;top:1103px;width:1px;height:37px;background:#fff;"></div>
<div class="cell" style="left:54px;top:419px;width:135px;height:37px;direction:ltr;"><span style="position:absolute;right:5px;top:1px;">26</span></div>
<div class="cell" style="left:190px;top:419px;width:135px;height:37px;direction:ltr;"><span style="position:absolute;right:5px;top:1px;">9</span></div>
<div class="cell" style="left:326px;top:419px;width:135px;height:37px;direction:ltr;"><span style="position:absolute;right:5px;top:1px;">9</span></div>
<div class="cell" style="left:462px;top:419px;width:135px;height:37px;direction:ltr;"><span style="position:absolute;right:5px;top:1px;">27</span></div>
<div class="cell" style="left:598px;top:419px;width:135px;height:37px;direction:ltr;"><span style="position:absolute;right:5px;top:1px;">10</span></div>
<div class="cell" style="left:734px;top:419px;width:135px;height:37px;direction:ltr;"><span style="position:absolute;right:5px;top:1px;">10</span></div>
<div class="cell" style="left:870px;top:419px;width:135px;height:37px;direction:ltr;"><span style="position:absolute;right:5px;top:1px;">28</span></div>
<div class="cell" style="left:1006px;top:419px;width:135px;height:37px;direction:ltr;"><span style="position:absolute;right:5px;top:1px;">11</span></div>
<div class="cell" style="left:1142px;top:419px;width:135px;height:37px;direction:ltr;"><span style="position:absolute;right:5px;top:1px;">11</span></div>
<div class="cell" style="left:1278px;top:419px;width:135px;height:37px;direction:ltr;"><span style="position:absolute;right:5px;top:1px;">29</span></div>
<div class="cell" style="left:1414px;top:419px;width:135px;height:37px;direction:ltr;"><span style="position:absolute;right:5px;top:1px;">12</span></div>
<div class="cell" style="left:1550px;top:419px;width:135px;height:37px;direction:ltr;"><span style="position:absolute;right:5px;top:1px;">12</span></div>
<div class="cell" style="left:1686px;top:419px;width:135px;height:37px;direction:ltr;"><span style="position:absolute;right:5px;top:1px;">30</span></div>
<div class="cell" style="left:1822px;top:419px;width:135px;height:37px;direction:ltr;"><span style="position:absolute;right:5px;top:1px;">13</span></div>
<div class="cell" style="left:1958px;top:419px;width:135px;height:37px;direction:ltr;"><span style="position:absolute;right:5px;top:1px;">13</span></div>
<div class="cell" style="left:2094px;top:419px;width:135px;height:37px;direction:ltr;"><span style="position:absolute;right:5px;top:1px;">31</span></div>
<div class="cell" style="left:2230px;top:419px;width:135px;height:37px;direction:ltr;"><span style="position:absolute;right:5px;top:1px;">14</span></div>
<div class="cell" style="left:2366px;top:419px;width:135px;height:37px;direction:ltr;"><span style="position:absolute;right:5px;top:1px;">14</span></div>
<div class="cell" style="left:54px;top:457px;width:135px;height:37px;"><span style="position:absolute;left:5px;top:1px">καὶ</span></div>
<div class="cell" style="left:54px;top:495px;width:135px;height:37px;"><span style="position:absolute;left:5px;top:1px">ἔδωκε</span></div>
<div class="cell" style="left:54px;top:533px;width:135px;height:37px;"><span style="position:absolute;left:5px;top:1px">Κύριος</span></div>
<div class="cell" style="left:54px;top:571px;width:135px;height:37px;"><span style="position:absolute;left:5px;top:1px">φρόνησιν</span></div>
<div class="cell" style="left:54px;top:609px;width:135px;height:37px;"><span style="position:absolute;left:5px;top:1px">τῷ</span></div>
<div class="cell" style="left:54px;top:647px;width:135px;height:37px;"><span style="position:absolute;left:5px;top:1px">Σολομῶντι</span></div>
<div class="cell" style="left:54px;top:685px;width:135px;height:37px;"><span style="position:absolute;left:5px;top:1px">καὶ</span></div>
<div class="cell" style="left:54px;top:723px;width:135px;height:37px;"><span style="position:absolute;left:5px;top:1px">σοφίαν</span></div>
<div class="cell" style="left:54px;top:761px;width:135px;height:37px;"><span style="position:absolute;left:5px;top:1px">πολλὴν</span></div>
<div class="cell" style="left:54px;top:799px;width:135px;height:37px;"><span style="position:absolute;left:5px;top:1px">σφόδρα</span></div>
<div class="cell" style="left:54px;top:837px;width:135px;height:37px;"><span style="position:absolute;left:5px;top:1px">καὶ</span></div>
<div class="cell" style="left:54px;top:875px;width:135px;height:37px;"><span style="position:absolute;left:5px;top:1px">χύμα</span></div>
<div class="cell" style="left:54px;top:913px;width:135px;height:37px;"><span style="position:absolute;left:5px;top:1px">καρδίας</span></div>
<div class="cell" style="left:54px;top:951px;width:135px;height:37px;"><span style="position:absolute;left:5px;top:1px">ὡς</span></div>
<div class="cell" style="left:54px;top:989px;width:135px;height:37px;"><span style="position:absolute;left:5px;top:1px">ἡ</span></div>
<div class="cell" style="left:54px;top:1027px;width:135px;height:37px;"><span style="position:absolute;left:5px;top:1px">ἄμμος</span></div>
<div class="cell" style="left:54px;top:1065px;width:135px;height:37px;"><span style="position:absolute;left:5px;top:1px">ἡ</span></div>
<div class="cell" style="left:54px;top:1103px;width:135px;height:37px;"><span style="position:absolute;left:5px;top:1px">παρὰ</span></div>
<div class="cell" style="left:54px;top:1141px;width:135px;height:37px;"><span style="position:absolute;left:5px;top:1px">τὴν</span></div>
<div class="cell" style="left:54px;top:1179px;width:135px;height:37px;"><span style="position:absolute;left:5px;top:1px">θάλασσαν,</span></div>
<div class="cell" style="left:190px;top:457px;width:135px;height:37px;"><span style="position:absolute;left:5px;top:1px">Καὶ</span></div>
<div class="cell" style="left:190px;top:495px;width:135px;height:37px;"><span style="position:absolute;left:5px;top:1px">ἔδωκεν</span></div>
<div class="cell" style="left:190px;top:533px;width:135px;height:37px;"><span style="position:absolute;left:5px;top:1px">κύριος</span></div>
<div class="cell" style="left:190px;top:571px;width:135px;height:37px;"><span style="position:absolute;left:5px;top:1px">φρόνησιν</span></div>
<div class="cell" style="left:190px;top:609px;width:135px;height:37px;"><span style="position:absolute;left:5px;top:1px">τῷ</span></div>
<div class="cell" style="left:190px;top:647px;width:135px;height:37px;"><span style="position:absolute;left:5px;top:1px">Σαλωμων</span></div>
<div class="cell" style="left:190px;top:685px;width:135px;height:37px;"><span style="position:absolute;left:5px;top:1px">καὶ</span></div>
<div class="cell" style="left:190px;top:723px;width:135px;height:37px;"><span style="position:absolute;left:5px;top:1px">σοφίαν</span></div>
<div class="cell" style="left:190px;top:761px;width:135px;height:37px;"><span style="position:absolute;left:5px;top:1px">πολλὴν</span></div>
<div class="cell" style="left:190px;top:799px;width:135px;height:37px;"><span style="position:absolute;left:5px;top:1px">σφόδρα</span></div>
<div class="cell" style="left:190px;top:837px;width:135px;height:37px;"><span style="position:absolute;left:5px;top:1px">καὶ</span></div>
<div class="cell" style="left:190px;top:875px;width:135px;height:37px;"><span style="position:absolute;left:5px;top:1px">χύμα</span></div>
<div class="cell" style="left:190px;top:913px;width:135px;height:37px;"><span style="position:absolute;left:5px;top:1px">καρδίας</span></div>
<div class="cell" style="left:190px;top:951px;width:135px;height:37px;"><span style="position:absolute;left:5px;top:1px">ὡς</span></div>
<div class="cell" style="left:190px;top:989px;width:135px;height:37px;"><span style="position:absolute;left:5px;top:1px">ἡ</span></div>
<div class="cell" style="left:190px;top:1027px;width:135px;height:37px;"><span style="position:absolute;left:5px;top:1px">ἄμμος</span></div>
<div class="cell" style="left:190px;top:1065px;width:135px;height:37px;"><span style="position:absolute;left:5px;top:1px">ἡ</span></div>
<div class="cell" style="left:190px;top:1103px;width:135px;height:37px;"><span style="position:absolute;left:5px;top:1px">παρὰ</span></div>
<div class="cell" style="left:190px;top:1141px;width:135px;height:37px;"><span style="position:absolute;left:5px;top:1px">τὴν</span></div>
<div class="cell" style="left:190px;top:1179px;width:135px;height:37px;"><span style="position:absolute;left:5px;top:1px">θάλασσαν,</span></div>
<div class="cell" style="left:305px;top:457px;width:156px;height:37px;direction:rtl;"><span style="position:absolute;right:5px;top:1px;transform:scaleX(0.94);transform-origin:100% 0;">וַיִּתֵּ֨ן</span></div>
<div class="cell" style="left:305px;top:495px;width:156px;height:37px;direction:rtl;"><span style="position:absolute;right:5px;top:1px;transform:scaleX(0.94);transform-origin:100% 0;">אֱלֹהִ֜ים</span></div>
<div class="cell" style="left:305px;top:533px;width:156px;height:37px;direction:rtl;"><span style="position:absolute;right:5px;top:1px;transform:scaleX(0.94);transform-origin:100% 0;">חָכְמָ֧ה</span></div>
<div class="cell" style="left:305px;top:571px;width:156px;height:37px;direction:rtl;"><span style="position:absolute;right:5px;top:1px;transform:scaleX(0.94);transform-origin:100% 0;">לִשְׁלֹמֹ֛ה</span></div>
<div class="cell" style="left:305px;top:609px;width:156px;height:37px;direction:rtl;"><span style="position:absolute;right:5px;top:1px;transform:scaleX(0.94);transform-origin:100% 0;">וּתְבוּנָ֖ה</span></div>
<div class="cell" style="left:305px;top:647px;width:156px;height:37px;direction:rtl;"><span style="position:absolute;right:5px;top:1px;transform:scaleX(0.94);transform-origin:100% 0;">הַרְבֵּ֣ה</span></div>
<div class="cell" style="left:305px;top:685px;width:156px;height:37px;direction:rtl;"><span style="position:absolute;right:5px;top:1px;transform:scaleX(0.94);transform-origin:100% 0;">מְאֹ֑ד</span></div>
<div class="cell" style="left:305px;top:723px;width:156px;height:37px;direction:rtl;"><span style="position:absolute;right:5px;top:1px;transform:scaleX(0.94);transform-origin:100% 0;">וְרֹ֣חַב</span></div>
<div class="cell" style="left:305px;top:761px;width:156px;height:37px;direction:rtl;"><span style="position:absolute;right:5px;top:1px;transform:scaleX(0.94);transform-origin:100% 0;">לֵ֔ב</span></div>
<div class="cell" style="left:305px;top:799px;width:156px;height:37px;direction:rtl;"><span style="position:absolute;right:5px;top:1px;transform:scaleX(0.94);transform-origin:100% 0;">כַּח֕וֹל</span></div>
<div class="cell" style="left:305px;top:837px;width:156px;height:37px;direction:rtl;"><span style="position:absolute;right:5px;top:1px;transform:scaleX(0.94);transform-origin:100% 0;">אֲשֶׁ֖ר</span></div>
<div class="cell" style="left:305px;top:875px;width:156px;height:37px;direction:rtl;"><span style="position:absolute;right:5px;top:1px;transform:scaleX(0.94);transform-origin:100% 0;">עַל־שְׂפַ֥ת</span></div>
<div class="cell" style="left:305px;top:913px;width:156px;height:37px;direction:rtl;"><span style="position:absolute;right:5px;top:1px;transform:scaleX(0.94);transform-origin:100% 0;">הַיָּֽם:</span></div>
<div class="cell" style="left:462px;top:457px;width:135px;height:37px;"><span style="position:absolute;left:5px;top:1px">καὶ</span></div>
<div class="cell" style="left:462px;top:495px;width:135px;height:37px;"><span style="position:absolute;left:5px;top:1px">ἐπληθύνθη</span></div>
<div class="cell" style="left:462px;top:533px;width:135px;height:37px;"><span style="position:absolute;left:5px;top:1px">ἡ</span></div>
<div class="cell" style="left:462px;top:571px;width:135px;height:37px;"><span style="position:absolute;left:5px;top:1px">σοφία</span></div>
<div class="cell" style="left:462px;top:609px;width:135px;height:37px;"><span style="position:absolute;left:5px;top:1px">Σολομῶντος</span></div>
<div class="cell" style="left:462px;top:647px;width:135px;height:37px;"><span style="position:absolute;left:5px;top:1px">ὑπὲρ</span></div>
<div class="cell" style="left:462px;top:685px;width:135px;height:37px;"><span style="position:absolute;left:5px;top:1px">τὴν</span></div>
<div class="cell" style="left:462px;top:723px;width:135px;height:37px;"><span style="position:absolute;left:5px;top:1px">φρόνησιν</span></div>
<div class="cell" style="left:462px;top:761px;width:135px;height:37px;"><span style="position:absolute;left:5px;top:1px">πάντων</span></div>
<div class="cell" style="left:462px;top:799px;width:135px;height:37px;"><span style="position:absolute;left:5px;top:1px">ἀρχαίων</span></div>
<div class="cell" style="left:462px;top:837px;width:135px;height:37px;"><span style="position:absolute;left:5px;top:1px">ἀνθρώπων</span></div>
<div class="cell" style="left:462px;top:875px;width:135px;height:37px;"><span style="position:absolute;left:5px;top:1px">καὶ</span></div>
<div class="cell" style="left:462px;top:913px;width:135px;height:37px;"><span style="position:absolute;left:5px;top:1px">ὑπὲρ</span></div>
<div class="cell" style="left:462px;top:951px;width:135px;height:37px;"><span style="position:absolute;left:5px;top:1px">πάντας</span></div>
<div class="cell" style="left:462px;top:989px;width:135px;height:37px;"><span style="position:absolute;left:5px;top:1px">φρονίμους</span></div>
<div class="cell" style="left:462px;top:1027px;width:135px;height:37px;"><span style="position:absolute;left:5px;top:1px">Αἰγύπτου.</span></div>
<div class="cell" style="left:598px;top:457px;width:135px;height:37px;"><span style="position:absolute;left:5px;top:1px">καὶ</span></div>
<div class="cell" style="left:598px;top:495px;width:135px;height:37px;"><span style="position:absolute;left:5px;top:1px">ἐπληθύνθη</span></div>
<div class="cell" style="left:598px;top:533px;width:135px;height:37px;"><span style="position:absolute;left:5px;top:1px">Σαλωμων</span></div>
<div class="cell" style="left:598px;top:571px;width:135px;height:37px;"><span style="position:absolute;left:5px;top:1px">σφόδρα</span></div>
<div class="cell" style="left:598px;top:609px;width:135px;height:37px;"><span style="position:absolute;left:5px;top:1px">ὑπὲρ</span></div>
<div class="cell" style="left:598px;top:647px;width:135px;height:37px;"><span style="position:absolute;left:5px;top:1px">τὴν</span></div>
<div class="cell" style="left:598px;top:685px;width:135px;height:37px;"><span style="position:absolute;left:5px;top:1px">φρόνησιν</span></div>
<div class="cell" style="left:598px;top:723px;width:135px;height:37px;"><span style="position:absolute;left:5px;top:1px">πάντων</span></div>
<div class="cell" style="left:598px;top:761px;width:135px;height:37px;"><span style="position:absolute;left:5px;top:1px">ἀρχαίων</span></div>
<div class="cell" style="left:598px;top:799px;width:271px;height:37px;"><span style="position:absolute;left:5px;top:1px">ἀνθρώπων</span></div>
<div class="cell" style="left:598px;top:837px;width:135px;height:37px;"><span style="position:absolute;left:5px;top:1px">καὶ</span></div>
<div class="cell" style="left:598px;top:875px;width:135px;height:37px;"><span style="position:absolute;left:5px;top:1px">ὑπὲρ</span></div>
<div class="cell" style="left:598px;top:913px;width:135px;height:37px;"><span style="position:absolute;left:5px;top:1px">πάντας</span></div>
<div class="cell" style="left:598px;top:951px;width:135px;height:37px;"><span style="position:absolute;left:5px;top:1px">φρονίμους</span></div>
<div class="cell" style="left:598px;top:989px;width:135px;height:37px;"><span style="position:absolute;left:5px;top:1px">Αἰγύπτου</span></div>
<div class="cell" style="left:713px;top:457px;width:156px;height:37px;direction:rtl;"><span style="position:absolute;right:5px;top:1px;transform:scaleX(0.94);transform-origin:100% 0;">וַתֵּ֙רֶב֙</span></div>
<div class="cell" style="left:713px;top:495px;width:156px;height:37px;direction:rtl;"><span style="position:absolute;right:5px;top:1px;transform:scaleX(0.94);transform-origin:100% 0;">חָכְמַ֣ת</span></div>
<div class="cell" style="left:713px;top:533px;width:156px;height:37px;direction:rtl;"><span style="position:absolute;right:5px;top:1px;transform:scaleX(0.94);transform-origin:100% 0;">שְׁלֹמֹ֔ה</span></div>
<div class="cell" style="left:713px;top:571px;width:156px;height:37px;direction:rtl;"><span style="position:absolute;right:5px;top:1px;transform:scaleX(0.94);transform-origin:100% 0;">מֵֽחָכְמַ֖ת</span></div>
<div class="cell" style="left:713px;top:609px;width:156px;height:37px;direction:rtl;"><span style="position:absolute;right:5px;top:1px;transform:scaleX(0.94);transform-origin:100% 0;">כָּל־בְּנֵי־קֶ֑דֶם</span></div>
<div class="cell" style="left:713px;top:647px;width:156px;height:37px;direction:rtl;"><span style="position:absolute;right:5px;top:1px;transform:scaleX(0.94);transform-origin:100% 0;">וּמִכֹּ֖ל</span></div>
<div class="cell" style="left:713px;top:685px;width:156px;height:37px;direction:rtl;"><span style="position:absolute;right:5px;top:1px;transform:scaleX(0.94);transform-origin:100% 0;">חָכְמַ֥ת</span></div>
<div class="cell" style="left:713px;top:723px;width:156px;height:37px;direction:rtl;"><span style="position:absolute;right:5px;top:1px;transform:scaleX(0.94);transform-origin:100% 0;">מִצְרָֽיִם:</span></div>
<div class="cell" style="left:870px;top:457px;width:135px;height:37px;"><span style="position:absolute;left:5px;top:1px">καὶ</span></div>
<div class="cell" style="left:870px;top:495px;width:135px;height:37px;"><span style="position:absolute;left:5px;top:1px">ἐσοφίσατο</span></div>
<div class="cell" style="left:870px;top:533px;width:135px;height:37px;"><span style="position:absolute;left:5px;top:1px">ὑπὲρ</span></div>
<div class="cell" style="left:870px;top:571px;width:135px;height:37px;"><span style="position:absolute;left:5px;top:1px">πάντας</span></div>
<div class="cell" style="left:870px;top:609px;width:135px;height:37px;"><span style="position:absolute;left:5px;top:1px">ἀνθρώπους</span></div>
<div class="cell" style="left:870px;top:647px;width:135px;height:37px;"><span style="position:absolute;left:5px;top:1px">καὶ</span></div>
<div class="cell" style="left:870px;top:685px;width:135px;height:37px;"><span style="position:absolute;left:5px;top:1px">ἐσοφίσατο</span></div>
<div class="cell" style="left:870px;top:723px;width:135px;height:37px;"><span style="position:absolute;left:5px;top:1px">ὑπὲρ</span></div>
<div class="cell" style="left:870px;top:761px;width:135px;height:37px;"><span style="position:absolute;left:5px;top:1px">Αἰθὰμ</span></div>
<div class="cell" style="left:870px;top:799px;width:135px;height:37px;"><span style="position:absolute;left:5px;top:1px">τὸν</span></div>
<div class="cell" style="left:870px;top:837px;width:135px;height:37px;"><span style="position:absolute;left:5px;top:1px">Ζαρείτην</span></div>
<div class="cell" style="left:870px;top:875px;width:135px;height:37px;"><span style="position:absolute;left:5px;top:1px">καὶ</span></div>
<div class="cell" style="left:870px;top:913px;width:135px;height:37px;"><span style="position:absolute;left:5px;top:1px">τὸν</span></div>
<div class="cell" style="left:870px;top:951px;width:135px;height:37px;"><span style="position:absolute;left:5px;top:1px">Αἰμὰν</span></div>
<div class="cell" style="left:870px;top:989px;width:135px;height:37px;"><span style="position:absolute;left:5px;top:1px">καὶ</span></div>
<div class="cell" style="left:870px;top:1027px;width:135px;height:37px;"><span style="position:absolute;left:5px;top:1px">τὸν</span></div>
<div class="cell" style="left:870px;top:1065px;width:135px;height:37px;"><span style="position:absolute;left:5px;top:1px">Χαλκὰχ</span></div>
<div class="cell" style="left:870px;top:1103px;width:135px;height:37px;"><span style="position:absolute;left:5px;top:1px">καὶ</span></div>
<div class="cell" style="left:870px;top:1141px;width:135px;height:37px;"><span style="position:absolute;left:5px;top:1px">τὸν</span></div>
<div class="cell" style="left:870px;top:1179px;width:135px;height:37px;"><span style="position:absolute;left:5px;top:1px">Δαρδαὲ</span></div>
<div class="cell" style="left:870px;top:1217px;width:135px;height:37px;"><span style="position:absolute;left:5px;top:1px">υἱὸν</span></div>
<div class="cell" style="left:870px;top:1255px;width:135px;height:37px;"><span style="position:absolute;left:5px;top:1px">Μααλά.</span></div>
<div class="cell" style="left:870px;top:1293px;width:135px;height:37px;"><span style="position:absolute;left:5px;top:1px">καὶ</span></div>
<div class="cell" style="left:870px;top:1331px;width:135px;height:37px;"><span style="position:absolute;left:5px;top:1px">ἐγένετο</span></div>
<div class="cell" style="left:870px;top:1369px;width:135px;height:37px;"><span style="position:absolute;left:5px;top:1px">τὸ</span></div>
<div class="cell" style="left:870px;top:1407px;width:135px;height:37px;"><span style="position:absolute;left:5px;top:1px">ὄνομα</span></div>
<div class="cell" style="left:870px;top:1445px;width:135px;height:37px;"><span style="position:absolute;left:5px;top:1px">αὐτοῦ</span></div>
<div class="cell" style="left:870px;top:1483px;width:135px;height:37px;"><span style="position:absolute;left:5px;top:1px">ἐν</span></div>
<div class="cell" style="left:870px;top:1521px;width:135px;height:37px;"><span style="position:absolute;left:5px;top:1px">πᾶσι</span></div>
<div class="cell" style="left:1006px;top:457px;width:135px;height:37px;"><span style="position:absolute;left:5px;top:1px">καὶ</span></div>
<div class="cell" style="left:1006px;top:495px;width:135px;height:37px;"><span style="position:absolute;left:5px;top:1px">ἐσοφίσατο</span></div>
<div class="cell" style="left:1006px;top:533px;width:135px;height:37px;"><span style="position:absolute;left:5px;top:1px">ὑπὲρ</span></div>
<div class="cell" style="left:1006px;top:571px;width:135px;height:37px;"><span style="position:absolute;left:5px;top:1px">πάντας</span></div>
<div class="cell" style="left:1006px;top:609px;width:135px;height:37px;"><span style="position:absolute;left:5px;top:1px">τοὺς</span></div>
<div class="cell" style="left:1006px;top:647px;width:135px;height:37px;"><span style="position:absolute;left:5px;top:1px">ἀνθρώπους</span></div>
<div class="cell" style="left:1006px;top:685px;width:135px;height:37px;"><span style="position:absolute;left:5px;top:1px">καὶ</span></div>
<div class="cell" style="left:1006px;top:723px;width:135px;height:37px;"><span style="position:absolute;left:5px;top:1px">ἐσοφίσατο</span></div>
<div class="cell" style="left:1006px;top:761px;width:135px;height:37px;"><span style="position:absolute;left:5px;top:1px">ὑπὲρ</span></div>
<div class="cell" style="left:1006px;top:799px;width:135px;height:37px;"><span style="position:absolute;left:5px;top:1px">Γαιθαν</span></div>
<div class="cell" style="left:1006px;top:837px;width:135px;height:37px;"><span style="position:absolute;left:5px;top:1px">τὸν</span></div>
<div class="cell" style="left:1006px;top:875px;width:135px;height:37px;"><span style="position:absolute;left:5px;top:1px">Εζραΐτην</span></div>
<div class="cell" style="left:1006px;top:913px;width:135px;height:37px;"><span style="position:absolute;left:5px;top:1px">καὶ</span></div>
<div class="cell" style="left:1006px;top:951px;width:135px;height:37px;"><span style="position:absolute;left:5px;top:1px">τὸν</span></div>
<div class="cell" style="left:1006px;top:989px;width:135px;height:37px;"><span style="position:absolute;left:5px;top:1px">Αιμαν</span></div>
<div class="cell" style="left:1006px;top:1027px;width:135px;height:37px;"><span style="position:absolute;left:5px;top:1px">καὶ</span></div>
<div class="cell" style="left:1006px;top:1065px;width:135px;height:37px;"><span style="position:absolute;left:5px;top:1px">τὸν</span></div>
<div class="cell" style="left:1006px;top:1103px;width:135px;height:37px;"><span style="position:absolute;left:5px;top:1px">Χαλκαλ</span></div>
<div class="cell" style="left:1006px;top:1141px;width:135px;height:37px;"><span style="position:absolute;left:5px;top:1px">καὶ</span></div>
<div class="cell" style="left:1006px;top:1179px;width:135px;height:37px;"><span style="position:absolute;left:5px;top:1px">Δαρδα</span></div>
<div class="cell" style="left:1006px;top:1217px;width:135px;height:37px;"><span style="position:absolute;left:5px;top:1px">υἱοὺς</span></div>
<div class="cell" style="left:1006px;top:1255px;width:135px;height:37px;"><span style="position:absolute;left:5px;top:1px">Μαλ.</span></div>
<div class="cell" style="left:1121px;top:457px;width:156px;height:37px;direction:rtl;"><span style="position:absolute;right:5px;top:1px;transform:scaleX(0.94);transform-origin:100% 0;">וַיֶּחְכַּם֮</span></div>
<div class="cell" style="left:1121px;top:495px;width:156px;height:37px;direction:rtl;"><span style="position:absolute;right:5px;top:1px;transform:scaleX(0.94);transform-origin:100% 0;">מִכָּל־הָאָדָם֒</span></div>
<div class="cell" style="left:1121px;top:533px;width:156px;height:37px;direction:rtl;"><span style="position:absolute;right:5px;top:1px;transform:scaleX(0.94);transform-origin:100% 0;">מֵאֵיתָ֣ן</span></div>
<div class="cell" style="left:1121px;top:571px;width:156px;height:37px;direction:rtl;"><span style="position:absolute;right:5px;top:1px;transform:scaleX(0.94);transform-origin:100% 0;">הָאֶזְרָחִ֔י</span></div>
<div class="cell" style="left:1121px;top:609px;width:156px;height:37px;direction:rtl;"><span style="position:absolute;right:5px;top:1px;transform:scaleX(0.94);transform-origin:100% 0;">וְהֵימָ֧ן</span></div>
<div class="cell" style="left:1121px;top:647px;width:156px;height:37px;direction:rtl;"><span style="position:absolute;right:5px;top:1px;transform:scaleX(0.94);transform-origin:100% 0;">וְכַלְכֹּ֛ל</span></div>
<div class="cell" style="left:1121px;top:685px;width:156px;height:37px;direction:rtl;"><span style="position:absolute;right:5px;top:1px;transform:scaleX(0.94);transform-origin:100% 0;">וְדַרְדַּ֖ע</span></div>
<div class="cell" style="left:1121px;top:723px;width:156px;height:37px;direction:rtl;"><span style="position:absolute;right:5px;top:1px;transform:scaleX(0.94);transform-origin:100% 0;">בְּנֵ֣י</span></div>
<div class="cell" style="left:1121px;top:761px;width:156px;height:37px;direction:rtl;"><span style="position:absolute;right:5px;top:1px;transform:scaleX(0.94);transform-origin:100% 0;">מָח֑וֹל</span></div>
<div class="cell" style="left:1121px;top:799px;width:156px;height:37px;direction:rtl;"><span style="position:absolute;right:5px;top:1px;transform:scaleX(0.94);transform-origin:100% 0;">וַֽיְהִי־שְׁמ֥וֹ</span></div>
<div class="cell" style="left:1121px;top:837px;width:156px;height:37px;direction:rtl;"><span style="position:absolute;right:5px;top:1px;transform:scaleX(0.94);transform-origin:100% 0;">בְכָל־הַגּוֹיִ֖ם</span></div>
<div class="cell" style="left:1121px;top:875px;width:156px;height:37px;direction:rtl;"><span style="position:absolute;right:5px;top:1px;transform:scaleX(0.94);transform-origin:100% 0;">סָבִֽיב:</span></div>
<div class="cell" style="left:1278px;top:457px;width:135px;height:37px;"><span style="position:absolute;left:5px;top:1px">καὶ</span></div>
<div class="cell" style="left:1278px;top:495px;width:135px;height:37px;"><span style="position:absolute;left:5px;top:1px">ἐλάλησε</span></div>
<div class="cell" style="left:1278px;top:533px;width:135px;height:37px;"><span style="position:absolute;left:5px;top:1px">τρισχιλίας</span></div>
<div class="cell" style="left:1278px;top:571px;width:135px;height:37px;"><span style="position:absolute;left:5px;top:1px">παραβολάς</span></div>
<div class="cell" style="left:1278px;top:609px;width:135px;height:37px;"><span style="position:absolute;left:5px;top:1px">καὶ</span></div>
<div class="cell" style="left:1278px;top:647px;width:135px;height:37px;"><span style="position:absolute;left:5px;top:1px">ἦσαν</span></div>
<div class="cell" style="left:1278px;top:685px;width:135px;height:37px;"><span style="position:absolute;left:5px;top:1px">ᾠδαὶ</span></div>
<div class="cell" style="left:1278px;top:723px;width:135px;height:37px;"><span style="position:absolute;left:5px;top:1px">αὐτοῦ</span></div>
<div class="cell" style="left:1278px;top:761px;width:135px;height:37px;"><span style="position:absolute;left:5px;top:1px">πεντακισχίλιαι.</span></div>
<div class="cell" style="left:1414px;top:457px;width:135px;height:37px;"><span style="position:absolute;left:5px;top:1px">καὶ</span></div>
<div class="cell" style="left:1414px;top:495px;width:135px;height:37px;"><span style="position:absolute;left:5px;top:1px">ἐλάλησεν</span></div>
<div class="cell" style="left:1414px;top:533px;width:135px;height:37px;"><span style="position:absolute;left:5px;top:1px">Σαλωμων</span></div>
<div class="cell" style="left:1414px;top:571px;width:135px;height:37px;"><span style="position:absolute;left:5px;top:1px">τρισχιλίας</span></div>
<div class="cell" style="left:1414px;top:609px;width:135px;height:37px;"><span style="position:absolute;left:5px;top:1px">παραβολάς</span></div>
<div class="cell" style="left:1414px;top:647px;width:135px;height:37px;"><span style="position:absolute;left:5px;top:1px">καὶ</span></div>
<div class="cell" style="left:1414px;top:685px;width:135px;height:37px;"><span style="position:absolute;left:5px;top:1px">ἦσαν</span></div>
<div class="cell" style="left:1414px;top:723px;width:135px;height:37px;"><span style="position:absolute;left:5px;top:1px">ᾠδαὶ</span></div>
<div class="cell" style="left:1414px;top:761px;width:135px;height:37px;"><span style="position:absolute;left:5px;top:1px">αὐτοῦ</span></div>
<div class="cell" style="left:1414px;top:799px;width:271px;height:37px;"><span style="position:absolute;left:5px;top:1px">πεντακισχίλιαι.</span></div>
<div class="cell" style="left:1529px;top:457px;width:156px;height:37px;direction:rtl;"><span style="position:absolute;right:5px;top:1px;transform:scaleX(0.94);transform-origin:100% 0;">וַיְדַבֵּ֕ר</span></div>
<div class="cell" style="left:1529px;top:495px;width:156px;height:37px;direction:rtl;"><span style="position:absolute;right:5px;top:1px;transform:scaleX(0.94);transform-origin:100% 0;">שְׁלֹ֥שֶׁת</span></div>
<div class="cell" style="left:1529px;top:533px;width:156px;height:37px;direction:rtl;"><span style="position:absolute;right:5px;top:1px;transform:scaleX(0.94);transform-origin:100% 0;">אֲלָפִ֖ים</span></div>
<div class="cell" style="left:1529px;top:571px;width:156px;height:37px;direction:rtl;"><span style="position:absolute;right:5px;top:1px;transform:scaleX(0.94);transform-origin:100% 0;">מָשָׁ֑ל</span></div>
<div class="cell" style="left:1529px;top:609px;width:156px;height:37px;direction:rtl;"><span style="position:absolute;right:5px;top:1px;transform:scaleX(0.94);transform-origin:100% 0;">וַיְהִ֥י</span></div>
<div class="cell" style="left:1529px;top:647px;width:156px;height:37px;direction:rtl;"><span style="position:absolute;right:5px;top:1px;transform:scaleX(0.94);transform-origin:100% 0;">שִׁיר֖וֹ</span></div>
<div class="cell" style="left:1529px;top:685px;width:156px;height:37px;direction:rtl;"><span style="position:absolute;right:5px;top:1px;transform:scaleX(0.94);transform-origin:100% 0;">חֲמִשָּׁ֥ה</span></div>
<div class="cell" style="left:1529px;top:723px;width:156px;height:37px;direction:rtl;"><span style="position:absolute;right:5px;top:1px;transform:scaleX(0.94);transform-origin:100% 0;">וָאָֽלֶף:</span></div>
<div class="cell" style="left:1686px;top:457px;width:135px;height:37px;"><span style="position:absolute;left:5px;top:1px">καὶ</span></div>
<div class="cell" style="left:1686px;top:495px;width:135px;height:37px;"><span style="position:absolute;left:5px;top:1px">ἐλάλησε</span></div>
<div class="cell" style="left:1686px;top:533px;width:135px;height:37px;"><span style="position:absolute;left:5px;top:1px">περὶ</span></div>
<div class="cell" style="left:1686px;top:571px;width:135px;height:37px;"><span style="position:absolute;left:5px;top:1px">τῶν</span></div>
<div class="cell" style="left:1686px;top:609px;width:135px;height:37px;"><span style="position:absolute;left:5px;top:1px">ξύλων</span></div>
<div class="cell" style="left:1686px;top:647px;width:135px;height:37px;"><span style="position:absolute;left:5px;top:1px">ἀπὸ</span></div>
<div class="cell" style="left:1686px;top:685px;width:135px;height:37px;"><span style="position:absolute;left:5px;top:1px">τῆς</span></div>
<div class="cell" style="left:1686px;top:723px;width:135px;height:37px;"><span style="position:absolute;left:5px;top:1px">κέδρου</span></div>
<div class="cell" style="left:1686px;top:761px;width:135px;height:37px;"><span style="position:absolute;left:5px;top:1px">τῆς</span></div>
<div class="cell" style="left:1686px;top:799px;width:135px;height:37px;"><span style="position:absolute;left:5px;top:1px">ἐν</span></div>
<div class="cell" style="left:1686px;top:837px;width:135px;height:37px;"><span style="position:absolute;left:5px;top:1px">τῷ</span></div>
<div class="cell" style="left:1686px;top:875px;width:135px;height:37px;"><span style="position:absolute;left:5px;top:1px">Λιβάνῳ</span></div>
<div class="cell" style="left:1686px;top:913px;width:135px;height:37px;"><span style="position:absolute;left:5px;top:1px">καὶ</span></div>
<div class="cell" style="left:1686px;top:951px;width:135px;height:37px;"><span style="position:absolute;left:5px;top:1px">ἕως</span></div>
<div class="cell" style="left:1686px;top:989px;width:135px;height:37px;"><span style="position:absolute;left:5px;top:1px">τῆς</span></div>
<div class="cell" style="left:1686px;top:1027px;width:135px;height:37px;"><span style="position:absolute;left:5px;top:1px">ὑσσώπου</span></div>
<div class="cell" style="left:1686px;top:1065px;width:135px;height:37px;"><span style="position:absolute;left:5px;top:1px">τῆς</span></div>
<div class="cell" style="left:1686px;top:1103px;width:135px;height:37px;"><span style="position:absolute;left:5px;top:1px">ἐκπορευομένης</span></div>
<div class="cell" style="left:1686px;top:1141px;width:135px;height:37px;"><span style="position:absolute;left:5px;top:1px">ἐκ</span></div>
<div class="cell" style="left:1686px;top:1179px;width:135px;height:37px;"><span style="position:absolute;left:5px;top:1px">τοῦ</span></div>
<div class="cell" style="left:1686px;top:1217px;width:135px;height:37px;"><span style="position:absolute;left:5px;top:1px">τοίχου.</span></div>
<div class="cell" style="left:1686px;top:1255px;width:135px;height:37px;"><span style="position:absolute;left:5px;top:1px">καὶ</span></div>
<div class="cell" style="left:1686px;top:1293px;width:135px;height:37px;"><span style="position:absolute;left:5px;top:1px">ἐλάλησε</span></div>
<div class="cell" style="left:1686px;top:1331px;width:135px;height:37px;"><span style="position:absolute;left:5px;top:1px">περὶ</span></div>
<div class="cell" style="left:1686px;top:1369px;width:135px;height:37px;"><span style="position:absolute;left:5px;top:1px">τῶν</span></div>
<div class="cell" style="left:1686px;top:1407px;width:135px;height:37px;"><span style="position:absolute;left:5px;top:1px">κτηνῶν</span></div>
<div class="cell" style="left:1686px;top:1445px;width:135px;height:37px;"><span style="position:absolute;left:5px;top:1px">καὶ</span></div>
<div class="cell" style="left:1686px;top:1483px;width:135px;height:37px;"><span style="position:absolute;left:5px;top:1px">περὶ</span></div>
<div class="cell" style="left:1686px;top:1521px;width:135px;height:37px;"><span style="position:absolute;left:5px;top:1px">τῶν</span></div>
<div class="cell" style="left:1822px;top:457px;width:135px;height:37px;"><span style="position:absolute;left:5px;top:1px">καὶ</span></div>
<div class="cell" style="left:1822px;top:495px;width:135px;height:37px;"><span style="position:absolute;left:5px;top:1px">ἐλάλησεν</span></div>
<div class="cell" style="left:1822px;top:533px;width:135px;height:37px;"><span style="position:absolute;left:5px;top:1px">περὶ</span></div>
<div class="cell" style="left:1822px;top:571px;width:135px;height:37px;"><span style="position:absolute;left:5px;top:1px">τῶν</span></div>
<div class="cell" style="left:1822px;top:609px;width:135px;height:37px;"><span style="position:absolute;left:5px;top:1px">ξύλων</span></div>
<div class="cell" style="left:1822px;top:647px;width:135px;height:37px;"><span style="position:absolute;left:5px;top:1px">ἀπὸ</span></div>
<div class="cell" style="left:1822px;top:685px;width:135px;height:37px;"><span style="position:absolute;left:5px;top:1px">τῆς</span></div>
<div class="cell" style="left:1822px;top:723px;width:135px;height:37px;"><span style="position:absolute;left:5px;top:1px">κέδρου</span></div>
<div class="cell" style="left:1822px;top:761px;width:135px;height:37px;"><span style="position:absolute;left:5px;top:1px">τῆς</span></div>
<div class="cell" style="left:1822px;top:799px;width:135px;height:37px;"><span style="position:absolute;left:5px;top:1px">ἐν</span></div>
<div class="cell" style="left:1822px;top:837px;width:135px;height:37px;"><span style="position:absolute;left:5px;top:1px">τῷ</span></div>
<div class="cell" style="left:1822px;top:875px;width:135px;height:37px;"><span style="position:absolute;left:5px;top:1px">Λιβάνῳ</span></div>
<div class="cell" style="left:1822px;top:913px;width:135px;height:37px;"><span style="position:absolute;left:5px;top:1px">καὶ</span></div>
<div class="cell" style="left:1822px;top:951px;width:135px;height:37px;"><span style="position:absolute;left:5px;top:1px">ἕως</span></div>
<div class="cell" style="left:1822px;top:989px;width:135px;height:37px;"><span style="position:absolute;left:5px;top:1px">τῆς</span></div>
<div class="cell" style="left:1822px;top:1027px;width:135px;height:37px;"><span style="position:absolute;left:5px;top:1px">ὑσσώπου</span></div>
<div class="cell" style="left:1822px;top:1065px;width:135px;height:37px;"><span style="position:absolute;left:5px;top:1px">τῆς</span></div>
<div class="cell" style="left:1822px;top:1103px;width:271px;height:37px;"><span style="position:absolute;left:5px;top:1px">ἐκπορευομένης</span></div>
<div class="cell" style="left:1822px;top:1141px;width:135px;height:37px;"><span style="position:absolute;left:5px;top:1px">διὰ</span></div>
<div class="cell" style="left:1822px;top:1179px;width:135px;height:37px;"><span style="position:absolute;left:5px;top:1px">τοῦ</span></div>
<div class="cell" style="left:1822px;top:1217px;width:135px;height:37px;"><span style="position:absolute;left:5px;top:1px">τοίχου</span></div>
<div class="cell" style="left:1822px;top:1255px;width:135px;height:37px;"><span style="position:absolute;left:5px;top:1px">καὶ</span></div>
<div class="cell" style="left:1822px;top:1293px;width:135px;height:37px;"><span style="position:absolute;left:5px;top:1px">ἐλάλησεν</span></div>
<div class="cell" style="left:1822px;top:1331px;width:135px;height:37px;"><span style="position:absolute;left:5px;top:1px">περὶ</span></div>
<div class="cell" style="left:1822px;top:1369px;width:135px;height:37px;"><span style="position:absolute;left:5px;top:1px">τῶν</span></div>
<div class="cell" style="left:1822px;top:1407px;width:135px;height:37px;"><span style="position:absolute;left:5px;top:1px">κτηνῶν</span></div>
<div class="cell" style="left:1822px;top:1445px;width:135px;height:37px;"><span style="position:absolute;left:5px;top:1px">καὶ</span></div>
<div class="cell" style="left:1822px;top:1483px;width:135px;height:37px;"><span style="position:absolute;left:5px;top:1px">περὶ</span></div>
<div class="cell" style="left:1822px;top:1521px;width:135px;height:37px;"><span style="position:absolute;left:5px;top:1px">τῶν</span></div>
<div class="cell" style="left:1937px;top:457px;width:156px;height:37px;direction:rtl;"><span style="position:absolute;right:5px;top:1px;transform:scaleX(0.94);transform-origin:100% 0;">וַיְדַבֵּר֙</span></div>
<div class="cell" style="left:1937px;top:495px;width:156px;height:37px;direction:rtl;"><span style="position:absolute;right:5px;top:1px;transform:scaleX(0.94);transform-origin:100% 0;">עַל־הָ֣עֵצִ֔ים</span></div>
<div class="cell" style="left:1937px;top:533px;width:156px;height:37px;direction:rtl;"><span style="position:absolute;right:5px;top:1px;transform:scaleX(0.94);transform-origin:100% 0;">מִן־הָאֶ֙רֶז֙</span></div>
<div class="cell" style="left:1937px;top:571px;width:156px;height:37px;direction:rtl;"><span style="position:absolute;right:5px;top:1px;transform:scaleX(0.94);transform-origin:100% 0;">אֲשֶׁ֣ר</span></div>
<div class="cell" style="left:1937px;top:609px;width:156px;height:37px;direction:rtl;"><span style="position:absolute;right:5px;top:1px;transform:scaleX(0.94);transform-origin:100% 0;">בַּלְּבָנ֔וֹן</span></div>
<div class="cell" style="left:1937px;top:647px;width:156px;height:37px;direction:rtl;"><span style="position:absolute;right:5px;top:1px;transform:scaleX(0.94);transform-origin:100% 0;">וְעַ֙ד֙</span></div>
<div class="cell" style="left:1937px;top:685px;width:156px;height:37px;direction:rtl;"><span style="position:absolute;right:5px;top:1px;transform:scaleX(0.94);transform-origin:100% 0;">הָאֵז֔וֹב</span></div>
<div class="cell" style="left:1937px;top:723px;width:156px;height:37px;direction:rtl;"><span style="position:absolute;right:5px;top:1px;transform:scaleX(0.94);transform-origin:100% 0;">אֲשֶׁ֥ר</span></div>
<div class="cell" style="left:1937px;top:761px;width:156px;height:37px;direction:rtl;"><span style="position:absolute;right:5px;top:1px;transform:scaleX(0.94);transform-origin:100% 0;">יֹצֵ֖א</span></div>
<div class="cell" style="left:1937px;top:799px;width:156px;height:37px;direction:rtl;"><span style="position:absolute;right:5px;top:1px;transform:scaleX(0.94);transform-origin:100% 0;">בַּקִּ֑יר</span></div>
<div class="cell" style="left:1937px;top:837px;width:156px;height:37px;direction:rtl;"><span style="position:absolute;right:5px;top:1px;transform:scaleX(0.94);transform-origin:100% 0;">וַיְדַבֵּר֙</span></div>
<div class="cell" style="left:1937px;top:875px;width:156px;height:37px;direction:rtl;"><span style="position:absolute;right:5px;top:1px;transform:scaleX(0.94);transform-origin:100% 0;">עַל־הַבְּהֵמָ֔ה</span></div>
<div class="cell" style="left:1937px;top:913px;width:156px;height:37px;direction:rtl;"><span style="position:absolute;right:5px;top:1px;transform:scaleX(0.94);transform-origin:100% 0;">וְעַל־הָע֔וֹף</span></div>
<div class="cell" style="left:1937px;top:951px;width:156px;height:37px;direction:rtl;"><span style="position:absolute;right:5px;top:1px;transform:scaleX(0.94);transform-origin:100% 0;">וְעַל־הָרֶ֖מֶשׂ</span></div>
<div class="cell" style="left:1937px;top:989px;width:156px;height:37px;direction:rtl;"><span style="position:absolute;right:5px;top:1px;transform:scaleX(0.94);transform-origin:100% 0;">וְעַל־הַדָּגִֽים:</span></div>
<div class="cell" style="left:2094px;top:457px;width:135px;height:37px;"><span style="position:absolute;left:5px;top:1px">καὶ</span></div>
<div class="cell" style="left:2094px;top:495px;width:135px;height:37px;"><span style="position:absolute;left:5px;top:1px">παρεγίνοντο</span></div>
<div class="cell" style="left:2094px;top:533px;width:135px;height:37px;"><span style="position:absolute;left:5px;top:1px">πάντες</span></div>
<div class="cell" style="left:2094px;top:571px;width:135px;height:37px;"><span style="position:absolute;left:5px;top:1px">οἱ</span></div>
<div class="cell" style="left:2094px;top:609px;width:135px;height:37px;"><span style="position:absolute;left:5px;top:1px">λαοὶ</span></div>
<div class="cell" style="left:2094px;top:647px;width:135px;height:37px;"><span style="position:absolute;left:5px;top:1px">ἀχκούειν</span></div>
<div class="cell" style="left:2094px;top:685px;width:135px;height:37px;"><span style="position:absolute;left:5px;top:1px">τῆς</span></div>
<div class="cell" style="left:2094px;top:723px;width:135px;height:37px;"><span style="position:absolute;left:5px;top:1px">σοφίας</span></div>
<div class="cell" style="left:2094px;top:761px;width:135px;height:37px;"><span style="position:absolute;left:5px;top:1px">Σολομῶντος</span></div>
<div class="cell" style="left:2094px;top:799px;width:135px;height:37px;"><span style="position:absolute;left:5px;top:1px">καὶ</span></div>
<div class="cell" style="left:2094px;top:837px;width:135px;height:37px;"><span style="position:absolute;left:5px;top:1px">ἐλάμβανε</span></div>
<div class="cell" style="left:2094px;top:875px;width:135px;height:37px;"><span style="position:absolute;left:5px;top:1px">δῶρα</span></div>
<div class="cell" style="left:2094px;top:913px;width:135px;height:37px;"><span style="position:absolute;left:5px;top:1px">παρὰ</span></div>
<div class="cell" style="left:2094px;top:951px;width:135px;height:37px;"><span style="position:absolute;left:5px;top:1px">πάντων</span></div>
<div class="cell" style="left:2094px;top:989px;width:135px;height:37px;"><span style="position:absolute;left:5px;top:1px">τῶν</span></div>
<div class="cell" style="left:2094px;top:1027px;width:135px;height:37px;"><span style="position:absolute;left:5px;top:1px">βασιλέων</span></div>
<div class="cell" style="left:2094px;top:1065px;width:135px;height:37px;"><span style="position:absolute;left:5px;top:1px">τῆς</span></div>
<div class="cell" style="left:2094px;top:1103px;width:135px;height:37px;"><span style="position:absolute;left:5px;top:1px">γῆς,</span></div>
<div class="cell" style="left:2094px;top:1141px;width:135px;height:37px;"><span style="position:absolute;left:5px;top:1px">ὅσοι</span></div>
<div class="cell" style="left:2094px;top:1179px;width:135px;height:37px;"><span style="position:absolute;left:5px;top:1px">ἤκουον</span></div>
<div class="cell" style="left:2094px;top:1217px;width:135px;height:37px;"><span style="position:absolute;left:5px;top:1px">τῆς</span></div>
<div class="cell" style="left:2094px;top:1255px;width:135px;height:37px;"><span style="position:absolute;left:5px;top:1px">σοφίας</span></div>
<div class="cell" style="left:2094px;top:1293px;width:135px;height:37px;"><span style="position:absolute;left:5px;top:1px">αὐτοῦ.</span></div>
<div class="cell" style="left:2230px;top:457px;width:135px;height:37px;"><span style="position:absolute;left:5px;top:1px">καὶ</span></div>
<div class="cell" style="left:2230px;top:495px;width:135px;height:37px;"><span style="position:absolute;left:5px;top:1px">παρεγίνοντο</span></div>
<div class="cell" style="left:2230px;top:533px;width:135px;height:37px;"><span style="position:absolute;left:5px;top:1px">πάντες</span></div>
<div class="cell" style="left:2230px;top:571px;width:135px;height:37px;"><span style="position:absolute;left:5px;top:1px">οἱ</span></div>
<div class="cell" style="left:2230px;top:609px;width:135px;height:37px;"><span style="position:absolute;left:5px;top:1px">λαοὶ</span></div>
<div class="cell" style="left:2230px;top:647px;width:135px;height:37px;"><span style="position:absolute;left:5px;top:1px">ἀκοῦσαι</span></div>
<div class="cell" style="left:2230px;top:685px;width:135px;height:37px;"><span style="position:absolute;left:5px;top:1px">τῆς</span></div>
<div class="cell" style="left:2230px;top:723px;width:135px;height:37px;"><span style="position:absolute;left:5px;top:1px">σοφίας</span></div>
<div class="cell" style="left:2230px;top:761px;width:135px;height:37px;"><span style="position:absolute;left:5px;top:1px">Σαλωμων,</span></div>
<div class="cell" style="left:2230px;top:799px;width:135px;height:37px;"><span style="position:absolute;left:5px;top:1px">καὶ</span></div>
<div class="cell" style="left:2230px;top:837px;width:135px;height:37px;"><span style="position:absolute;left:5px;top:1px">ἐλάμβανεν</span></div>
<div class="cell" style="left:2230px;top:875px;width:135px;height:37px;"><span style="position:absolute;left:5px;top:1px">δῶρα</span></div>
<div class="cell" style="left:2230px;top:913px;width:135px;height:37px;"><span style="position:absolute;left:5px;top:1px">παρὰ</span></div>
<div class="cell" style="left:2230px;top:951px;width:135px;height:37px;"><span style="position:absolute;left:5px;top:1px">πάντων</span></div>
<div class="cell" style="left:2230px;top:989px;width:135px;height:37px;"><span style="position:absolute;left:5px;top:1px">τῶν</span></div>
<div class="cell" style="left:2230px;top:1027px;width:135px;height:37px;"><span style="position:absolute;left:5px;top:1px">βασιλέων</span></div>
<div class="cell" style="left:2230px;top:1065px;width:135px;height:37px;"><span style="position:absolute;left:5px;top:1px">τῆς</span></div>
<div class="cell" style="left:2230px;top:1103px;width:135px;height:37px;"><span style="position:absolute;left:5px;top:1px">γῆς,</span></div>
<div class="cell" style="left:2230px;top:1141px;width:135px;height:37px;"><span style="position:absolute;left:5px;top:1px">ὅσοι</span></div>
<div class="cell" style="left:2230px;top:1179px;width:135px;height:37px;"><span style="position:absolute;left:5px;top:1px">ἤκουον</span></div>
<div class="cell" style="left:2230px;top:1217px;width:135px;height:37px;"><span style="position:absolute;left:5px;top:1px">τῆς</span></div>
<div class="cell" style="left:2230px;top:1255px;width:135px;height:37px;"><span style="position:absolute;left:5px;top:1px">σοφίας</span></div>
<div class="cell" style="left:2230px;top:1293px;width:135px;height:37px;"><span style="position:absolute;left:5px;top:1px">αὐτοῦ.</span></div>
<div class="cell" style="left:2345px;top:457px;width:156px;height:37px;direction:rtl;"><span style="position:absolute;right:5px;top:1px;transform:scaleX(0.94);transform-origin:100% 0;">וַיָּבֹ֙אוּ֙</span></div>
<div class="cell" style="left:2345px;top:495px;width:156px;height:37px;direction:rtl;"><span style="position:absolute;right:5px;top:1px;transform:scaleX(0.94);transform-origin:100% 0;">מִכָּל־הָ֣עַמִּ֔ים</span></div>
<div class="cell" style="left:2345px;top:533px;width:156px;height:37px;direction:rtl;"><span style="position:absolute;right:5px;top:1px;transform:scaleX(0.94);transform-origin:100% 0;">לִשְׁמֹ֕עַ</span></div>
<div class="cell" style="left:2345px;top:571px;width:156px;height:37px;direction:rtl;"><span style="position:absolute;right:5px;top:1px;transform:scaleX(0.94);transform-origin:100% 0;">אֵ֖ת</span></div>
<div class="cell" style="left:2345px;top:609px;width:156px;height:37px;direction:rtl;"><span style="position:absolute;right:5px;top:1px;transform:scaleX(0.94);transform-origin:100% 0;">חָכְמַ֣ת</span></div>
<div class="cell" style="left:2345px;top:647px;width:156px;height:37px;direction:rtl;"><span style="position:absolute;right:5px;top:1px;transform:scaleX(0.94);transform-origin:100% 0;">שְׁלֹמֹ֑ה</span></div>
<div class="cell" style="left:2345px;top:685px;width:156px;height:37px;direction:rtl;"><span style="position:absolute;right:5px;top:1px;transform:scaleX(0.94);transform-origin:100% 0;">מֵאֵת֙</span></div>
<div class="cell" style="left:2345px;top:723px;width:156px;height:37px;direction:rtl;"><span style="position:absolute;right:5px;top:1px;transform:scaleX(0.94);transform-origin:100% 0;">כָּל־מַלְכֵ֣י</span></div>
<div class="cell" style="left:2345px;top:761px;width:156px;height:37px;direction:rtl;"><span style="position:absolute;right:5px;top:1px;transform:scaleX(0.94);transform-origin:100% 0;">הָאָ֔רֶץ</span></div>
<div class="cell" style="left:2345px;top:799px;width:156px;height:37px;direction:rtl;"><span style="position:absolute;right:5px;top:1px;transform:scaleX(0.94);transform-origin:100% 0;">אֲשֶׁ֥ר</span></div>
<div class="cell" style="left:2345px;top:837px;width:156px;height:37px;direction:rtl;"><span style="position:absolute;right:5px;top:1px;transform:scaleX(0.94);transform-origin:100% 0;">שָׁמְע֖וּ</span></div>
<div class="cell" style="left:2345px;top:875px;width:156px;height:37px;direction:rtl;"><span style="position:absolute;right:5px;top:1px;transform:scaleX(0.94);transform-origin:100% 0;">אֶת־חָכְמָתֽוֹ:</span></div>
<div class="cell" style="left:2345px;top:913px;width:156px;height:37px;direction:rtl;"><span style="position:absolute;right:5px;top:1px;transform:scaleX(0.94);transform-origin:100% 0;">ס</span></div>
<div class="r" style="left:51px;top:416px;width:141px;height:3px;background:#1e7145;"></div>
<div class="r" style="left:51px;top:416px;width:3px;height:43px;background:#1e7145;"></div>
<div class="r" style="left:189px;top:416px;width:3px;height:35px;background:#1e7145;"></div>
<div class="r" style="left:51px;top:456px;width:133px;height:3px;background:#1e7145;"></div>
<div class="r" style="left:184px;top:451px;width:10px;height:10px;background:#fff;"></div>
<div class="r" style="left:185px;top:452px;width:8px;height:8px;background:#1e7145;"></div>
<div class="r" style="left:10px;top:317px;width:202px;height:44px;background:#fff;box-sizing:border-box;border:1px solid #c6c6c6;"></div>
<div class="t" style="left:17.70px;top:326.69px;font-size:27px;line-height:27px;color:#333;transform:scaleX(0.8970);transform-origin:0 0;">A1</div>
<svg class="s" style="left:184px;top:332px;" width="18" height="11" viewBox="0 0 18 11"><path d="M2 2 H16 L9 9.5 Z" fill="#767676"/></svg>
<div class="r" style="left:240px;top:329px;width:4px;height:4px;background:#a6a6a6;"></div>
<div class="r" style="left:240px;top:336.5px;width:4px;height:4px;background:#a6a6a6;"></div>
<div class="r" style="left:240px;top:344.5px;width:4px;height:4px;background:#a6a6a6;"></div>
<div class="r" style="left:272px;top:317px;width:218px;height:44px;background:#fff;box-sizing:border-box;border:1px solid #c6c6c6;"></div>
<svg class="s" style="left:296px;top:328px;" width="28" height="25" viewBox="0 0 28 25"><path d="M3.5 3.5 L22.5 21.5 M22.5 3.5 L3.5 21.5" stroke="#c4c4c4" stroke-width="2.6" stroke-linecap="round"/></svg>
<svg class="s" style="left:366px;top:327px;" width="32" height="26" viewBox="0 0 32 26"><path d="M3.5 13.5 L11 21 L27.5 4" fill="none" stroke="#c8c8c8" stroke-width="3.4" stroke-linecap="round" stroke-linejoin="round"/></svg>
<div class="t" style="left:439px;top:318.5px;font-family:'Liberation Serif';font-style:italic;font-size:34px;line-height:34px;color:#6e6e6e">fx</div>
<div class="r" style="left:496px;top:317px;width:2221px;height:44px;background:#fff;box-sizing:border-box;border:1px solid #c6c6c6;border-right:none;"></div>
<div class="t" style="left:518.90px;top:326.69px;font-size:27px;line-height:27px;color:#333;transform:scaleX(0.9233);transform-origin:0 0;">26</div>
<svg class="s" style="left:2697px;top:331px;" width="20" height="16" viewBox="0 0 20 16"><polyline points="3,3 10,10 17,3" fill="none" stroke="#6e6e6e" stroke-width="3"/></svg>
<div class="r" style="left:0px;top:1559px;width:2717px;height:45px;background:#e6e6e6;"></div>
<div class="r" style="left:0px;top:1560px;width:2698px;height:1px;background:#9c9c9c;"></div>
<svg class="s" style="left:33px;top:1573px;" width="10" height="17" viewBox="0 0 10 17"><path d="M9 0 V16 L0 8 Z" fill="#c4c4c4"/></svg>
<svg class="s" style="left:77px;top:1573px;" width="10" height="17" viewBox="0 0 10 17"><path d="M0 0 V16 L9 8 Z" fill="#c4c4c4"/></svg>
<div class="r" style="left:145px;top:1560px;width:137px;height:40px;background:#fff;box-sizing:border-box;border-left:1px solid #a0a0a0;border-right:1px solid #a0a0a0;"></div>
<div class="r" style="left:145px;top:1597px;width:137px;height:3px;background:#1e7145;"></div>
<div class="t" style="left:157.80px;top:1565.88px;font-size:27px;line-height:27px;color:#1e6b41;font-weight:bold;transform:scaleX(0.9217);transform-origin:0 0;">Synopsis</div>
<div class="t" style="left:295.80px;top:1565.88px;font-size:27px;line-height:27px;color:#444;transform:scaleX(0.9179);transform-origin:0 0;">MT</div>
<div class="r" style="left:347px;top:1564px;width:1px;height:35px;background:#8a8a8a;"></div>
<div class="t" style="left:361.60px;top:1565.88px;font-size:27px;line-height:27px;color:#444;transform:scaleX(0.8588);transform-origin:0 0;">LXX</div>
<div class="r" style="left:421px;top:1564px;width:1px;height:35px;background:#8a8a8a;"></div>
<div class="t" style="left:436.40px;top:1565.88px;font-size:27px;line-height:27px;color:#444;transform:scaleX(0.9500);transform-origin:0 0;">Ant.</div>
<div class="r" style="left:497px;top:1564px;width:1px;height:35px;background:#8a8a8a;"></div>
<svg class="s" style="left:545px;top:1565px;" width="36" height="36" viewBox="0 0 36 36"><circle cx="17.8" cy="17.8" r="15" fill="none" stroke="#777" stroke-width="2.2"/><path d="M17.8 10 V25.6 M10 17.8 H25.6" stroke="#666" stroke-width="3"/></svg>
<div class="r" style="left:1637px;top:1573px;width:4px;height:4px;background:#a6a6a6;"></div>
<div class="r" style="left:1637px;top:1580px;width:4px;height:4px;background:#a6a6a6;"></div>
<div class="r" style="left:1637px;top:1587px;width:4px;height:4px;background:#a6a6a6;"></div>
<div class="r" style="left:1662px;top:1565px;width:33px;height:33px;background:#fff;box-sizing:border-box;border:2px solid #adadad;"></div>
<svg class="s" style="left:1674px;top:1573px;" width="10" height="17" viewBox="0 0 10 17"><path d="M8.5 0.5 V16 L0.5 8.25 Z" fill="#767676"/></svg>
<div class="r" style="left:1693px;top:1565px;width:924px;height:33px;background:#fff;box-sizing:border-box;border:2px solid #adadad;"></div>
<div class="r" style="left:2617px;top:1565px;width:49px;height:33px;background:#d9d9d9;"></div>
<div class="r" style="left:2666px;top:1565px;width:33px;height:33px;background:#fff;box-sizing:border-box;border:2px solid #adadad;"></div>
<svg class="s" style="left:2678.5px;top:1573.5px;" width="10" height="17" viewBox="0 0 10 17"><path d="M0.5 0.5 V16 L8.5 8.25 Z" fill="#767676"/></svg>
<div class="r" style="left:0px;top:1603px;width:2717px;height:2px;background:#c8c6c4;"></div>
<div class="r" style="left:2698px;top:381px;width:19px;height:1180px;background:#e6e6e6;"></div>
<div class="r" style="left:2697px;top:418px;width:1px;height:1143px;background:#9c9c9c;"></div>
<div class="r" style="left:2700px;top:382px;width:17px;height:35px;background:#fff;box-sizing:border-box;border:2px solid #adadad;border-right:none;border-bottom:3px solid #adadad;"></div>
<svg class="s" style="left:2708px;top:393px;" width="10" height="10" viewBox="0 0 10 10"><path d="M0.5 9 L9.5 0 V9 Z" fill="#767676"/></svg>
<div class="r" style="left:2700px;top:417px;width:17px;height:854px;background:#fff;box-sizing:border-box;border-left:2px solid #adadad;border-bottom:2px solid #adadad;"></div>
<div class="r" style="left:2700px;top:1271px;width:17px;height:258px;background:#d9d9d9;"></div>
<div class="r" style="left:2700px;top:1529px;width:17px;height:33px;background:#fff;box-sizing:border-box;border:2px solid #adadad;border-right:none;"></div>
<svg class="s" style="left:2708px;top:1541px;" width="10" height="10" viewBox="0 0 10 10"><path d="M0.5 0.5 H9.5 V9.5 Z" fill="#767676"/></svg>
<div class="t" style="left:27.50px;top:1625.41px;font-size:22px;line-height:22px;color:#444;transform:scaleX(0.8438);transform-origin:0 0;">Ready</div>
<div class="r" style="left:2106px;top:1605px;width:83px;height:43px;background:#d2d2d2;"></div>
<svg class="s" style="left:2132px;top:1622px;" width="30" height="30" viewBox="0 0 30 30"><rect x="3" y="3" width="24" height="24" fill="#d9d9d9"/><path d="M3 2 V28 M27 2 V28 M2 3 H28 M2 27 H28 M11 3 V28 M19 3 V28 M3 11 H28 M3 19 H28" fill="none" stroke="#444" stroke-width="2"/></svg>
<svg class="s" style="left:2216px;top:1622px;" width="32" height="30" viewBox="0 0 32 30"><rect x="3" y="2" width="26" height="27" fill="none" stroke="#444" stroke-width="2"/><rect x="8" y="7" width="16" height="22" fill="none" stroke="#444" stroke-width="1.8"/><path d="M11.5 12 H20.5 M11.5 16 H20.5 M11.5 20 H20.5 M11.5 24 H20.5" stroke="#444" stroke-width="1.8"/></svg>
<svg class="s" style="left:2300px;top:1622px;" width="32" height="30" viewBox="0 0 32 30"><path d="M3 30 V2 H29 V30 M11 2 V14.5 M18.5 2 V14.5 M3 14.5 H18.5" fill="none" stroke="#444" stroke-width="2"/></svg>
<div class="r" style="left:2370px;top:1635px;width:15px;height:2px;background:#555;"></div>
<div class="r" style="left:2396px;top:1635px;width:199px;height:2px;background:#a6a6a6;"></div>
<div class="r" style="left:2491px;top:1624px;width:10px;height:24px;background:#6e6e6e;"></div>
<div class="r" style="left:2605px;top:1635px;width:16px;height:2px;background:#555;"></div>
<div class="r" style="left:2612px;top:1627px;width:2px;height:16px;background:#555;"></div>
<div class="t" style="left:2660.00px;top:1626.57px;font-size:23px;line-height:23px;color:#444;transform:scaleX(0.8186);transform-origin:0 0;">100%</div>
</body></html>
